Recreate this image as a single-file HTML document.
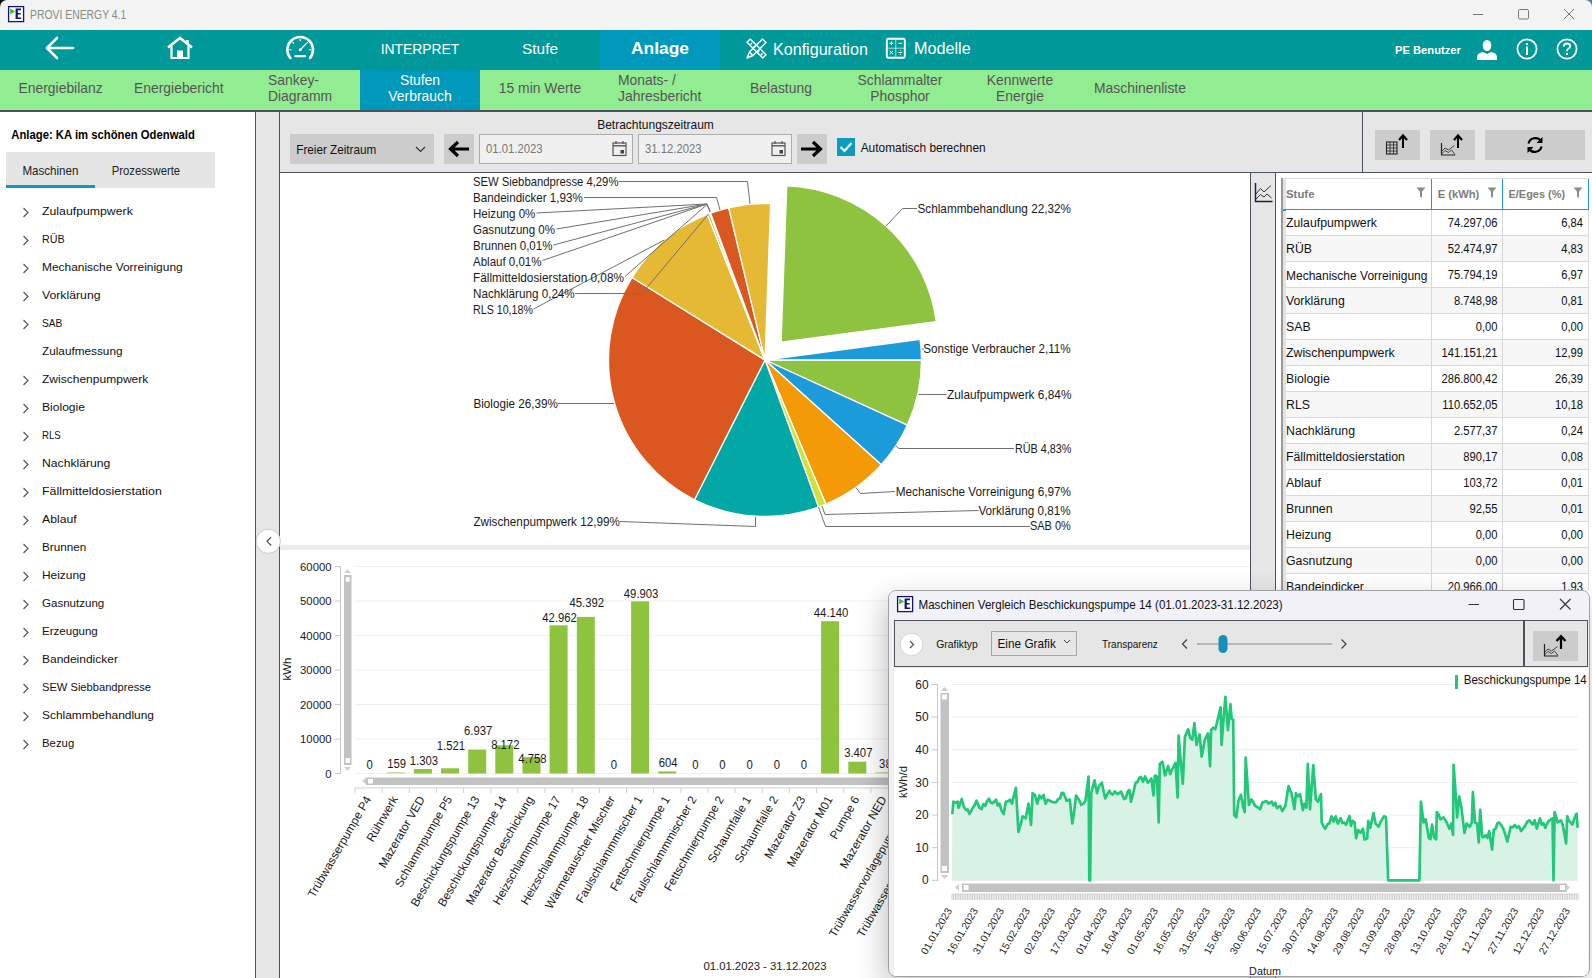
<!DOCTYPE html><html><head><meta charset="utf-8"><style>
html,body{margin:0;padding:0}
body{width:1592px;height:978px;overflow:hidden;position:relative;background:#fff;font-family:"Liberation Sans",sans-serif}
.t{position:absolute;white-space:nowrap}
.r{position:absolute}
</style></head><body>
<div class="r" style="left:0px;top:0px;width:8px;height:8px;background:#111"></div>
<div class="r" style="left:1584px;top:0px;width:8px;height:8px;background:#4f7aa3"></div>
<div class="r" style="left:0px;top:0px;width:1592px;height:30px;background:#f3f3f3;border-radius:7px 7px 0 0"></div>
<svg class="r" style="left:7px;top:5px" width="18" height="18" viewBox="0 0 18 18"><rect x="1.6" y="1.6" width="15" height="15" fill="#fff" stroke="#14146e" stroke-width="1.3"/><path d="M3.2 3.6 L8.2 6.4 L3.2 9.2Z" fill="#2ec52e"/><path d="M8.6 3.6 H14 V5.3 H10.8 V7.9 H13.6 V9.5 H10.8 V12.4 H14.2 V14 H8.6Z" fill="#14146e"/></svg>
<div class="t" style="left:30.0px;top:11.0px;font-size:10.4px;line-height:10.4px;color:#8a8a8a;font-weight:normal;transform:scaleY(1.2);transform-origin:0 80%">PROVI ENERGY 4.1</div>
<svg class="r" style="left:1460px;top:0" width="132" height="30"><path d="M13 14.5 H23" stroke="#777" stroke-width="1"/><rect x="58.5" y="9.5" width="10" height="9.5" rx="1.2" fill="none" stroke="#777" stroke-width="1"/><path d="M104 9 L114 19 M114 9 L104 19" stroke="#777" stroke-width="1"/></svg>
<div class="r" style="left:0px;top:30px;width:1592px;height:40px;background:#009898"></div>
<div class="r" style="left:600px;top:30px;width:120px;height:40px;background:#0099bb"></div>
<svg class="r" style="left:40px;top:30px" width="40" height="40"><path d="M7 18 H33 M17 8 L7 18 L17 28" fill="none" stroke="#fff" stroke-width="2.6" stroke-linecap="round" stroke-linejoin="round"/></svg>
<svg class="r" style="left:160px;top:29.8px" width="40" height="40"><path d="M8 17.5 L20 8 L32 17.5" fill="none" stroke="#fff" stroke-width="2.6" stroke-linejoin="miter"/><path d="M27.5 10 V14" stroke="#fff" stroke-width="2.4"/><path d="M11.5 16 V28 H28.5 V16" fill="none" stroke="#fff" stroke-width="2.2"/><rect x="17" y="20.5" width="6" height="7.5" fill="#fff"/></svg>
<svg class="r" style="left:280px;top:30px" width="40" height="40"><path d="M10.4 28 A12.8 12.8 0 1 1 30 28" fill="none" stroke="#fff" stroke-width="2.6" stroke-linecap="round"/><path d="M20.2 9 V11.3 M12.6 12.2 L14 13.6 M27.8 12.2 L26.4 13.6 M9.3 19.8 H11.6 M31.1 19.8 H28.8" stroke="#fff" stroke-width="1.1"/><path d="M20.2 19.8 L26.2 13.8" stroke="#fff" stroke-width="1.3"/><circle cx="20.2" cy="19.8" r="1.5" fill="#fff"/><path d="M15.5 26.2 H25" stroke="#fff" stroke-width="2.3" stroke-linecap="round"/></svg>
<div class="t" style="left:360.0px;width:120px;top:42.9px;font-size:13.9px;line-height:13.9px;color:#fff;font-weight:normal;text-align:center;transform:scaleY(1.04);transform-origin:50% 80%">INTERPRET</div>
<div class="t" style="left:480.0px;width:120px;top:41.4px;font-size:15.4px;line-height:15.4px;color:#fff;font-weight:normal;text-align:center;">Stufe</div>
<div class="t" style="left:600.0px;width:120px;top:40.4px;font-size:17.4px;line-height:17.4px;color:#fff;font-weight:bold;text-align:center;">Anlage</div>
<svg class="r" style="left:745.5px;top:37.5px" width="21" height="21" viewBox="0 0 21 21"><g fill="none" stroke="#fff" stroke-width="1.5" stroke-linejoin="round"><path d="M1 4.2 L4.2 1 L20 16.8 L16.8 20 Z"/><path d="M4.5 6.5 L6 5 M7.5 9.5 L9 8 M12 14 L13.5 12.5 M15 17 L16.5 15.5"/><path d="M16.5 1 L20 4.5 L7 17.5 L1 20 L3.5 14 Z M3.5 14 L7 17.5"/></g></svg>
<div class="t" style="left:773.0px;top:40.5px;font-size:16.1px;line-height:16.1px;color:#fff;font-weight:normal;">Konfiguration</div>
<svg class="r" style="left:885px;top:37px" width="22" height="22" viewBox="0 0 22 22"><rect x="1.8" y="1.8" width="18" height="19" rx="1.5" fill="none" stroke="#fff" stroke-width="1.9"/><path d="M10.8 2.5 V20 M2.5 11.2 H19.5" stroke="#fff" stroke-opacity="0.75" stroke-width="0.9"/><path d="M4.5 6.3 H8.3 M6.4 4.4 V8.2 M13.4 6.3 H17.2 M4.6 13.8 L8 17.2 M8 13.8 L4.6 17.2 M13.4 15.5 H17.2" stroke="#fff" stroke-width="1"/><circle cx="15.3" cy="13.6" r="0.6" fill="#fff"/><circle cx="15.3" cy="17.4" r="0.6" fill="#fff"/></svg>
<div class="t" style="left:914.0px;top:40.4px;font-size:16.2px;line-height:16.2px;color:#fff;font-weight:normal;">Modelle</div>
<div class="t" style="left:1395.0px;top:45.3px;font-size:11.2px;line-height:11.2px;color:#fff;font-weight:bold;">PE Benutzer</div>
<svg class="r" style="left:1476px;top:39px" width="22" height="22"><ellipse cx="11" cy="6.5" rx="4.3" ry="5.5" fill="#fff"/><path d="M1 21 V18 Q1 14 7 13 L11 15 L15 13 Q21 14 21 18 V21 Z" fill="#fff"/></svg>
<svg class="r" style="left:1515px;top:37px" width="24" height="24"><circle cx="12" cy="12" r="9.6" fill="none" stroke="#fff" stroke-width="1.8"/><rect x="11" y="9.5" width="2" height="8.5" fill="#fff"/><rect x="11" y="6" width="2" height="2" fill="#fff"/></svg>
<svg class="r" style="left:1555px;top:37px" width="24" height="24"><circle cx="12" cy="12" r="9.6" fill="none" stroke="#fff" stroke-width="1.8"/><path d="M8.8 9.5 Q8.8 6.5 12 6.5 Q15.2 6.5 15.2 9.2 Q15.2 11 13 12 Q12 12.5 12 14.2" fill="none" stroke="#fff" stroke-width="1.8"/><rect x="11" y="16" width="2" height="2" fill="#fff"/></svg>
<div class="r" style="left:0px;top:70px;width:1592px;height:40px;background:#92ec92"></div>
<div class="r" style="left:360px;top:70px;width:120px;height:40px;background:#0099bb"></div>
<div class="r" style="left:0px;top:110px;width:1592px;height:2px;background:#4b5260"></div>
<div class="t" style="left:18.5px;top:82.0px;font-size:13.9px;line-height:13.9px;color:#555555;font-weight:normal;transform:scaleY(1.08);transform-origin:0 80%">Energiebilanz</div>
<div class="t" style="left:134.0px;top:82.0px;font-size:13.9px;line-height:13.9px;color:#555555;font-weight:normal;transform:scaleY(1.08);transform-origin:0 80%">Energiebericht</div>
<div class="t" style="left:268.0px;top:74.0px;font-size:13.9px;line-height:13.9px;color:#555555;font-weight:normal;transform:scaleY(1.08);transform-origin:0 80%">Sankey-</div>
<div class="t" style="left:268.0px;top:90.0px;font-size:13.9px;line-height:13.9px;color:#555555;font-weight:normal;transform:scaleY(1.08);transform-origin:0 80%">Diagramm</div>
<div class="t" style="left:360.0px;width:120px;top:74.0px;font-size:13.9px;line-height:13.9px;color:#fff;font-weight:normal;text-align:center;transform:scaleY(1.08);transform-origin:50% 80%">Stufen</div>
<div class="t" style="left:360.0px;width:120px;top:90.0px;font-size:13.9px;line-height:13.9px;color:#fff;font-weight:normal;text-align:center;transform:scaleY(1.08);transform-origin:50% 80%">Verbrauch</div>
<div class="t" style="left:480.0px;width:120px;top:82.0px;font-size:13.9px;line-height:13.9px;color:#555555;font-weight:normal;text-align:center;transform:scaleY(1.08);transform-origin:50% 80%">15 min Werte</div>
<div class="t" style="left:618.0px;top:74.0px;font-size:13.9px;line-height:13.9px;color:#555555;font-weight:normal;transform:scaleY(1.08);transform-origin:0 80%">Monats- /</div>
<div class="t" style="left:618.0px;top:90.0px;font-size:13.9px;line-height:13.9px;color:#555555;font-weight:normal;transform:scaleY(1.08);transform-origin:0 80%">Jahresbericht</div>
<div class="t" style="left:721.0px;width:120px;top:82.0px;font-size:13.9px;line-height:13.9px;color:#555555;font-weight:normal;text-align:center;transform:scaleY(1.08);transform-origin:50% 80%">Belastung</div>
<div class="t" style="left:840.0px;width:120px;top:74.0px;font-size:13.9px;line-height:13.9px;color:#555555;font-weight:normal;text-align:center;transform:scaleY(1.08);transform-origin:50% 80%">Schlammalter</div>
<div class="t" style="left:840.0px;width:120px;top:90.0px;font-size:13.9px;line-height:13.9px;color:#555555;font-weight:normal;text-align:center;transform:scaleY(1.08);transform-origin:50% 80%">Phosphor</div>
<div class="t" style="left:960.0px;width:120px;top:74.0px;font-size:13.9px;line-height:13.9px;color:#555555;font-weight:normal;text-align:center;transform:scaleY(1.08);transform-origin:50% 80%">Kennwerte</div>
<div class="t" style="left:960.0px;width:120px;top:90.0px;font-size:13.9px;line-height:13.9px;color:#555555;font-weight:normal;text-align:center;transform:scaleY(1.08);transform-origin:50% 80%">Energie</div>
<div class="t" style="left:1080.0px;width:120px;top:82.0px;font-size:13.9px;line-height:13.9px;color:#555555;font-weight:normal;text-align:center;transform:scaleY(1.08);transform-origin:50% 80%">Maschinenliste</div>
<div class="r" style="left:0px;top:112px;width:255px;height:866px;background:#fff"></div>
<div class="t" style="left:11.3px;top:130.4px;font-size:11.3px;line-height:11.3px;color:#000;font-weight:bold;transform:scaleY(1.1);transform-origin:0 80%">Anlage: KA im schönen Odenwald</div>
<div class="r" style="left:6px;top:152px;width:209px;height:36px;background:#e5e5e5"></div>
<div class="r" style="left:6px;top:185px;width:89px;height:3px;background:#0f98c0"></div>
<div class="t" style="left:22.4px;top:165.2px;font-size:11.6px;line-height:11.6px;color:#222;font-weight:normal;transform:scaleY(1.1);transform-origin:0 90%">Maschinen</div>
<div class="t" style="left:111.7px;top:166.1px;font-size:11.3px;line-height:11.3px;color:#222;font-weight:normal;transform:scaleY(1.1);transform-origin:0 90%">Prozesswerte</div>
<svg class="r" style="left:21px;top:206px" width="10" height="12"><path d="M2.5 2 L7 6.5 L2.5 11" fill="none" stroke="#555" stroke-width="1.15"/></svg>
<div class="t" style="left:42.0px;top:205.8px;font-size:11.8px;line-height:11.8px;color:#111;font-weight:normal;transform:scaleX(1.0410);transform-origin:0 80%">Zulaufpumpwerk</div>
<svg class="r" style="left:21px;top:234px" width="10" height="12"><path d="M2.5 2 L7 6.5 L2.5 11" fill="none" stroke="#555" stroke-width="1.15"/></svg>
<div class="t" style="left:42.0px;top:233.8px;font-size:11.8px;line-height:11.8px;color:#111;font-weight:normal;transform:scaleX(0.9071);transform-origin:0 80%">RÜB</div>
<svg class="r" style="left:21px;top:262px" width="10" height="12"><path d="M2.5 2 L7 6.5 L2.5 11" fill="none" stroke="#555" stroke-width="1.15"/></svg>
<div class="t" style="left:42.0px;top:261.8px;font-size:11.8px;line-height:11.8px;color:#111;font-weight:normal;transform:scaleX(1.0118);transform-origin:0 80%">Mechanische Vorreinigung</div>
<svg class="r" style="left:21px;top:290px" width="10" height="12"><path d="M2.5 2 L7 6.5 L2.5 11" fill="none" stroke="#555" stroke-width="1.15"/></svg>
<div class="t" style="left:42.0px;top:289.8px;font-size:11.8px;line-height:11.8px;color:#111;font-weight:normal;transform:scaleX(1.0371);transform-origin:0 80%">Vorklärung</div>
<svg class="r" style="left:21px;top:318px" width="10" height="12"><path d="M2.5 2 L7 6.5 L2.5 11" fill="none" stroke="#555" stroke-width="1.15"/></svg>
<div class="t" style="left:42.0px;top:317.8px;font-size:11.8px;line-height:11.8px;color:#111;font-weight:normal;transform:scaleX(0.8639);transform-origin:0 80%">SAB</div>
<div class="t" style="left:42.0px;top:345.8px;font-size:11.8px;line-height:11.8px;color:#111;font-weight:normal;transform:scaleX(0.9979);transform-origin:0 80%">Zulaufmessung</div>
<svg class="r" style="left:21px;top:374px" width="10" height="12"><path d="M2.5 2 L7 6.5 L2.5 11" fill="none" stroke="#555" stroke-width="1.15"/></svg>
<div class="t" style="left:42.0px;top:373.8px;font-size:11.8px;line-height:11.8px;color:#111;font-weight:normal;transform:scaleX(1.0195);transform-origin:0 80%">Zwischenpumpwerk</div>
<svg class="r" style="left:21px;top:402px" width="10" height="12"><path d="M2.5 2 L7 6.5 L2.5 11" fill="none" stroke="#555" stroke-width="1.15"/></svg>
<div class="t" style="left:42.0px;top:401.8px;font-size:11.8px;line-height:11.8px;color:#111;font-weight:normal;transform:scaleX(1.0242);transform-origin:0 80%">Biologie</div>
<svg class="r" style="left:21px;top:430px" width="10" height="12"><path d="M2.5 2 L7 6.5 L2.5 11" fill="none" stroke="#555" stroke-width="1.15"/></svg>
<div class="t" style="left:42.0px;top:429.8px;font-size:11.8px;line-height:11.8px;color:#111;font-weight:normal;transform:scaleX(0.8146);transform-origin:0 80%">RLS</div>
<svg class="r" style="left:21px;top:458px" width="10" height="12"><path d="M2.5 2 L7 6.5 L2.5 11" fill="none" stroke="#555" stroke-width="1.15"/></svg>
<div class="t" style="left:42.0px;top:457.8px;font-size:11.8px;line-height:11.8px;color:#111;font-weight:normal;transform:scaleX(1.0310);transform-origin:0 80%">Nachklärung</div>
<svg class="r" style="left:21px;top:486px" width="10" height="12"><path d="M2.5 2 L7 6.5 L2.5 11" fill="none" stroke="#555" stroke-width="1.15"/></svg>
<div class="t" style="left:42.0px;top:485.8px;font-size:11.8px;line-height:11.8px;color:#111;font-weight:normal;transform:scaleX(1.0499);transform-origin:0 80%">Fällmitteldosierstation</div>
<svg class="r" style="left:21px;top:514px" width="10" height="12"><path d="M2.5 2 L7 6.5 L2.5 11" fill="none" stroke="#555" stroke-width="1.15"/></svg>
<div class="t" style="left:42.0px;top:513.8px;font-size:11.8px;line-height:11.8px;color:#111;font-weight:normal;transform:scaleX(1.0372);transform-origin:0 80%">Ablauf</div>
<svg class="r" style="left:21px;top:542px" width="10" height="12"><path d="M2.5 2 L7 6.5 L2.5 11" fill="none" stroke="#555" stroke-width="1.15"/></svg>
<div class="t" style="left:42.0px;top:541.8px;font-size:11.8px;line-height:11.8px;color:#111;font-weight:normal;transform:scaleX(0.9908);transform-origin:0 80%">Brunnen</div>
<svg class="r" style="left:21px;top:570px" width="10" height="12"><path d="M2.5 2 L7 6.5 L2.5 11" fill="none" stroke="#555" stroke-width="1.15"/></svg>
<div class="t" style="left:42.0px;top:569.8px;font-size:11.8px;line-height:11.8px;color:#111;font-weight:normal;transform:scaleX(1.0094);transform-origin:0 80%">Heizung</div>
<svg class="r" style="left:21px;top:598px" width="10" height="12"><path d="M2.5 2 L7 6.5 L2.5 11" fill="none" stroke="#555" stroke-width="1.15"/></svg>
<div class="t" style="left:42.0px;top:597.8px;font-size:11.8px;line-height:11.8px;color:#111;font-weight:normal;transform:scaleX(0.9791);transform-origin:0 80%">Gasnutzung</div>
<svg class="r" style="left:21px;top:626px" width="10" height="12"><path d="M2.5 2 L7 6.5 L2.5 11" fill="none" stroke="#555" stroke-width="1.15"/></svg>
<div class="t" style="left:42.0px;top:625.8px;font-size:11.8px;line-height:11.8px;color:#111;font-weight:normal;transform:scaleX(0.9777);transform-origin:0 80%">Erzeugung</div>
<svg class="r" style="left:21px;top:654px" width="10" height="12"><path d="M2.5 2 L7 6.5 L2.5 11" fill="none" stroke="#555" stroke-width="1.15"/></svg>
<div class="t" style="left:42.0px;top:653.8px;font-size:11.8px;line-height:11.8px;color:#111;font-weight:normal;transform:scaleX(1.0150);transform-origin:0 80%">Bandeindicker</div>
<svg class="r" style="left:21px;top:682px" width="10" height="12"><path d="M2.5 2 L7 6.5 L2.5 11" fill="none" stroke="#555" stroke-width="1.15"/></svg>
<div class="t" style="left:42.0px;top:681.8px;font-size:11.8px;line-height:11.8px;color:#111;font-weight:normal;transform:scaleX(0.9442);transform-origin:0 80%">SEW Siebbandpresse</div>
<svg class="r" style="left:21px;top:710px" width="10" height="12"><path d="M2.5 2 L7 6.5 L2.5 11" fill="none" stroke="#555" stroke-width="1.15"/></svg>
<div class="t" style="left:42.0px;top:709.8px;font-size:11.8px;line-height:11.8px;color:#111;font-weight:normal;transform:scaleX(1.0103);transform-origin:0 80%">Schlammbehandlung</div>
<svg class="r" style="left:21px;top:738px" width="10" height="12"><path d="M2.5 2 L7 6.5 L2.5 11" fill="none" stroke="#555" stroke-width="1.15"/></svg>
<div class="t" style="left:42.0px;top:737.8px;font-size:11.8px;line-height:11.8px;color:#111;font-weight:normal;transform:scaleX(0.9624);transform-origin:0 80%">Bezug</div>
<div class="r" style="left:255px;top:112px;width:25px;height:866px;background:#e6e6e6"></div>
<div class="r" style="left:255px;top:112px;width:1px;height:866px;background:#4b5260"></div>
<div class="r" style="left:279px;top:112px;width:1px;height:866px;background:#4b5260"></div>
<svg class="r" style="left:254px;top:527px" width="30" height="30"><circle cx="14.3" cy="14.3" r="12.1" fill="#fff" stroke="#c4c4c4" stroke-width="0.9"/><path d="M17.2 10.2 L13 14.3 L17.2 18.5" fill="none" stroke="#444" stroke-width="1.1"/></svg>
<div class="r" style="left:280px;top:112px;width:1312px;height:60px;background:#e6e6e6"></div>
<div class="r" style="left:280px;top:172px;width:1312px;height:1px;background:#4b5260"></div>
<div class="r" style="left:1362px;top:112px;width:1px;height:61px;background:#4b5260"></div>
<div class="t" style="left:555.5px;width:200px;top:118.6px;font-size:12.0px;line-height:12.0px;color:#111;font-weight:normal;text-align:center;transform:scaleY(1.05);transform-origin:50% 80%">Betrachtungszeitraum</div>
<div class="r" style="left:290px;top:134px;width:144px;height:30px;background:#cccccc"></div>
<div class="t" style="left:296.3px;top:144.1px;font-size:11.7px;line-height:11.7px;color:#111;font-weight:normal;transform:scaleY(1.08);transform-origin:0 80%">Freier Zeitraum</div>
<svg class="r" style="left:414px;top:145px" width="14" height="10"><path d="M2 2 L6.5 6.5 L11 2" fill="none" stroke="#333" stroke-width="1.2"/></svg>
<div class="r" style="left:444px;top:134px;width:30px;height:30px;background:#cccccc"></div>
<svg class="r" style="left:444px;top:134px" width="30" height="30"><path d="M25 15 H8 M14 8 L6.5 15 L14 22" fill="none" stroke="#000" stroke-width="3.2" stroke-linejoin="miter"/></svg>
<div class="r" style="left:479px;top:134px;width:154px;height:30px;background:#f0f0f0;border:1px solid #adadad;box-sizing:border-box"></div>
<div class="t" style="left:486.0px;top:143.9px;font-size:11.3px;line-height:11.3px;color:#777;font-weight:normal;transform:scaleY(1.08);transform-origin:0 80%">01.01.2023</div>
<svg class="r" style="left:612px;top:140px" width="16" height="17"><rect x="1" y="3" width="13" height="12.5" fill="none" stroke="#555" stroke-width="1.2"/><path d="M1 5.8 H14" stroke="#555" stroke-width="1.4"/><path d="M4 1 V4 M11 1 V4" stroke="#555" stroke-width="1.2"/><rect x="8.5" y="10" width="3.5" height="3.5" fill="#444"/></svg>
<div class="r" style="left:638px;top:134px;width:154px;height:30px;background:#f0f0f0;border:1px solid #adadad;box-sizing:border-box"></div>
<div class="t" style="left:645.0px;top:143.9px;font-size:11.3px;line-height:11.3px;color:#777;font-weight:normal;transform:scaleY(1.08);transform-origin:0 80%">31.12.2023</div>
<svg class="r" style="left:771px;top:140px" width="16" height="17"><rect x="1" y="3" width="13" height="12.5" fill="none" stroke="#555" stroke-width="1.2"/><path d="M1 5.8 H14" stroke="#555" stroke-width="1.4"/><path d="M4 1 V4 M11 1 V4" stroke="#555" stroke-width="1.2"/><rect x="8.5" y="10" width="3.5" height="3.5" fill="#444"/></svg>
<div class="r" style="left:797px;top:134px;width:30px;height:30px;background:#cccccc"></div>
<svg class="r" style="left:797px;top:134px" width="30" height="30"><path d="M4 15 H22 M16 8 L23.5 15 L16 22" fill="none" stroke="#000" stroke-width="3.2" stroke-linejoin="miter"/></svg>
<div class="r" style="left:837px;top:138px;width:18px;height:18px;background:#0e9bc2"></div>
<svg class="r" style="left:837px;top:138px" width="18" height="18"><path d="M3.5 9 L7.5 13 L14.5 5" fill="none" stroke="#fff" stroke-width="2"/></svg>
<div class="t" style="left:860.7px;top:142.5px;font-size:11.9px;line-height:11.9px;color:#111;font-weight:normal;transform:scaleY(1.05);transform-origin:0 80%">Automatisch berechnen</div>
<div class="r" style="left:1375px;top:130px;width:45px;height:30px;background:#cccccc"></div>
<div class="r" style="left:1430px;top:130px;width:45px;height:30px;background:#cccccc"></div>
<div class="r" style="left:1485px;top:130px;width:100px;height:30px;background:#cccccc"></div>
<svg class="r" style="left:1375px;top:130px" width="45" height="30"><rect x="11.5" y="12" width="10.5" height="12" fill="none" stroke="#222" stroke-width="1.1"/><path d="M11.5 15 H22 M11.5 18 H22 M11.5 21 H22 M15 12 V24 M18.5 12 V24" stroke="#222" stroke-width="0.8"/><path d="M28 18 V6.5" stroke="#000" stroke-width="2"/><path d="M24 10 L28 5.5 L32 10" fill="none" stroke="#000" stroke-width="2.2"/></svg>
<svg class="r" style="left:1430px;top:130px" width="45" height="30"><path d="M11.5 13 V25 H25" fill="none" stroke="#222" stroke-width="1.2"/><path d="M11.5 21.5 L15 18 L18.5 20 L24.5 15.5 M11.5 24 L15 20.5 L18.5 22.5 L21.5 20 L25 24.5" fill="none" stroke="#333" stroke-width="0.9"/><path d="M28 18 V6.5" stroke="#000" stroke-width="2"/><path d="M24 10 L28 5.5 L32 10" fill="none" stroke="#000" stroke-width="2.2"/></svg>
<svg class="r" style="left:1485px;top:130px" width="100" height="30"><path d="M43.5 13.5 A7 7 0 0 1 56 11" fill="none" stroke="#000" stroke-width="2.2"/><path d="M57.5 7 V13 H51.5Z" fill="#000"/><path d="M56.5 16.5 A7 7 0 0 1 44 19" fill="none" stroke="#000" stroke-width="2.2"/><path d="M42.5 23 V17 H48.5Z" fill="#000"/></svg>
<svg class="r" style="left:0;top:0" width="1592" height="978"><path d="M765.00 360.00 L921.50 360.00 A156.5 156.5 0 0 1 907.27 425.21 Z" fill="#8dc33f" stroke="#fff" stroke-width="1.3" stroke-linejoin="round"/><path d="M765.00 360.00 L907.27 425.21 A156.5 156.5 0 0 1 881.28 464.74 Z" fill="#1c9bdb" stroke="#fff" stroke-width="1.3" stroke-linejoin="round"/><path d="M765.00 360.00 L881.28 464.74 A156.5 156.5 0 0 1 825.89 504.17 Z" fill="#f39a06" stroke="#fff" stroke-width="1.3" stroke-linejoin="round"/><path d="M765.00 360.00 L825.89 504.17 A156.5 156.5 0 0 1 818.47 507.08 Z" fill="#d2e03a" stroke="#fff" stroke-width="1.3" stroke-linejoin="round"/><path d="M765.00 360.00 L818.47 507.08 A156.5 156.5 0 0 1 694.48 499.71 Z" fill="#01a8a6" stroke="#fff" stroke-width="1.3" stroke-linejoin="round"/><path d="M765.00 360.00 L694.48 499.71 A156.5 156.5 0 0 1 631.97 277.56 Z" fill="#da5820" stroke="#fff" stroke-width="1.3" stroke-linejoin="round"/><path d="M765.00 360.00 L631.97 277.56 A156.5 156.5 0 0 1 707.48 214.45 Z" fill="#e5b933" stroke="#fff" stroke-width="1.3" stroke-linejoin="round"/><path d="M765.00 360.00 L707.48 214.45 A156.5 156.5 0 0 1 709.68 213.60 Z" fill="#8dc33f" stroke="#fff" stroke-width="1.3" stroke-linejoin="round"/><path d="M765.00 360.00 L709.68 213.60 A156.5 156.5 0 0 1 710.42 213.33 Z" fill="#1c9bdb" stroke="#fff" stroke-width="1.3" stroke-linejoin="round"/><path d="M765.00 360.00 L710.42 213.33 A156.5 156.5 0 0 1 710.51 213.29 Z" fill="#f39a06" stroke="#fff" stroke-width="1.3" stroke-linejoin="round"/><path d="M765.00 360.00 L710.51 213.29 A156.5 156.5 0 0 1 710.60 213.26 Z" fill="#d2e03a" stroke="#fff" stroke-width="1.3" stroke-linejoin="round"/><path d="M765.00 360.00 L710.60 213.26 A156.5 156.5 0 0 1 728.75 207.76 Z" fill="#da5820" stroke="#fff" stroke-width="1.3" stroke-linejoin="round"/><path d="M765.00 360.00 L728.75 207.76 A156.5 156.5 0 0 1 770.60 203.60 Z" fill="#e5b933" stroke="#fff" stroke-width="1.3" stroke-linejoin="round"/><path d="M781.13 342.23 L786.73 185.83 A156.5 156.5 0 0 1 936.26 321.54 Z" fill="#8dc33f" stroke="#fff" stroke-width="1.3" stroke-linejoin="round"/><path d="M765.00 360.00 L920.13 339.31 A156.5 156.5 0 0 1 921.50 360.00 Z" fill="#1c9bdb" stroke="#fff" stroke-width="1.3" stroke-linejoin="round"/><path d="M619 181.5 L747.5 181.5 L750 204" fill="none" stroke="#707070" stroke-width="1"/><path d="M584 197.5 L716.5 197.5 L720 210" fill="none" stroke="#707070" stroke-width="1"/><path d="M536.5 213 L707 204 L710.5 212" fill="none" stroke="#707070" stroke-width="1"/><path d="M556.5 229 L707 204" fill="none" stroke="#707070" stroke-width="1"/><path d="M553.5 245 L707 204" fill="none" stroke="#707070" stroke-width="1"/><path d="M542.5 260.5 L707 204" fill="none" stroke="#707070" stroke-width="1"/><path d="M625 276.5 L707 204.5 L710 212" fill="none" stroke="#707070" stroke-width="1"/><path d="M575 293.5 L642 293.5 L708.5 214" fill="none" stroke="#707070" stroke-width="1"/><path d="M533.5 309 L664.4 240" fill="none" stroke="#707070" stroke-width="1"/><path d="M558 403.5 L614 403.5" fill="none" stroke="#707070" stroke-width="1"/><path d="M620 521.5 L755.5 526.5 L755.5 517" fill="none" stroke="#707070" stroke-width="1"/><path d="M922 349 L924 349" fill="none" stroke="#707070" stroke-width="1"/><path d="M918.5 394.5 L946.5 394.5" fill="none" stroke="#707070" stroke-width="1"/><path d="M896 446 L899 448.5 L1014 448.5" fill="none" stroke="#707070" stroke-width="1"/><path d="M856 487.5 L860.5 493.5 L895 491.5" fill="none" stroke="#707070" stroke-width="1"/><path d="M822 506 L825 514.5 L978.5 510.5" fill="none" stroke="#707070" stroke-width="1"/><path d="M818.5 507 L825.5 526.5 L1030 526.5" fill="none" stroke="#707070" stroke-width="1"/><path d="M886 226 L902.5 208.5 L917 208.5" fill="none" stroke="#707070" stroke-width="1"/></svg>
<div class="t" style="left:473.4px;top:175.9px;font-size:11.75px;line-height:11.75px;color:#1a1a1a;font-weight:normal;transform:scale(0.9596,1.05);transform-origin:0 80%">SEW Siebbandpresse 4,29%</div>
<div class="t" style="left:473.4px;top:191.9px;font-size:11.75px;line-height:11.75px;color:#1a1a1a;font-weight:normal;transform:scale(0.9888,1.05);transform-origin:0 80%">Bandeindicker 1,93%</div>
<div class="t" style="left:473.4px;top:207.9px;font-size:11.75px;line-height:11.75px;color:#1a1a1a;font-weight:normal;transform:scale(0.9849,1.05);transform-origin:0 80%">Heizung 0%</div>
<div class="t" style="left:473.4px;top:223.9px;font-size:11.75px;line-height:11.75px;color:#1a1a1a;font-weight:normal;transform:scale(0.9808,1.05);transform-origin:0 80%">Gasnutzung 0%</div>
<div class="t" style="left:473.4px;top:239.9px;font-size:11.75px;line-height:11.75px;color:#1a1a1a;font-weight:normal;transform:scale(0.9803,1.05);transform-origin:0 80%">Brunnen 0,01%</div>
<div class="t" style="left:473.4px;top:255.9px;font-size:11.75px;line-height:11.75px;color:#1a1a1a;font-weight:normal;transform:scale(0.9801,1.05);transform-origin:0 80%">Ablauf 0,01%</div>
<div class="t" style="left:473.4px;top:271.9px;font-size:11.75px;line-height:11.75px;color:#1a1a1a;font-weight:normal;transform:scale(1.0053,1.05);transform-origin:0 80%">Fällmitteldosierstation 0,08%</div>
<div class="t" style="left:473.4px;top:287.9px;font-size:11.75px;line-height:11.75px;color:#1a1a1a;font-weight:normal;transform:scale(0.9918,1.05);transform-origin:0 80%">Nachklärung 0,24%</div>
<div class="t" style="left:473.4px;top:303.9px;font-size:11.75px;line-height:11.75px;color:#1a1a1a;font-weight:normal;transform:scale(0.9080,1.05);transform-origin:0 80%">RLS 10,18%</div>
<div class="t" style="left:473.4px;top:397.9px;font-size:11.69px;line-height:11.69px;color:#1a1a1a;font-weight:normal;transform:scaleY(1.05);transform-origin:0 80%">Biologie 26,39%</div>
<div class="t" style="left:473.4px;top:515.9px;font-size:11.72px;line-height:11.72px;color:#1a1a1a;font-weight:normal;transform:scaleY(1.05);transform-origin:0 80%">Zwischenpumpwerk 12,99%</div>
<div class="t" style="left:917.5px;top:202.9px;font-size:11.75px;line-height:11.75px;color:#1a1a1a;font-weight:normal;transform:scaleY(1.05);transform-origin:0 80%">Schlammbehandlung 22,32%</div>
<div class="t" style="right:521.0px;top:343.4px;font-size:11.75px;line-height:11.75px;color:#1a1a1a;font-weight:normal;text-align:right;transform:scale(0.9919,1.05);transform-origin:100% 80%">Sonstige Verbraucher 2,11%</div>
<div class="t" style="right:521.0px;top:388.9px;font-size:11.75px;line-height:11.75px;color:#1a1a1a;font-weight:normal;text-align:right;transform:scale(1.0087,1.05);transform-origin:100% 80%">Zulaufpumpwerk 6,84%</div>
<div class="t" style="right:521.0px;top:442.9px;font-size:11.75px;line-height:11.75px;color:#1a1a1a;font-weight:normal;text-align:right;transform:scale(0.9204,1.05);transform-origin:100% 80%">RÜB 4,83%</div>
<div class="t" style="right:521.0px;top:485.9px;font-size:11.75px;line-height:11.75px;color:#1a1a1a;font-weight:normal;text-align:right;transform:scale(1.0020,1.05);transform-origin:100% 80%">Mechanische Vorreinigung 6,97%</div>
<div class="t" style="right:521.0px;top:505.2px;font-size:11.75px;line-height:11.75px;color:#1a1a1a;font-weight:normal;text-align:right;transform:scale(0.9952,1.05);transform-origin:100% 80%">Vorklärung 0,81%</div>
<div class="t" style="right:521.0px;top:520.4px;font-size:11.75px;line-height:11.75px;color:#1a1a1a;font-weight:normal;text-align:right;transform:scale(0.9324,1.05);transform-origin:100% 80%">SAB 0%</div>
<div class="r" style="left:280px;top:545px;width:970px;height:5px;background:#ececec"></div>
<div class="r" style="left:1250px;top:173px;width:26px;height:805px;background:#e6e6e6"></div>
<div class="r" style="left:1250px;top:173px;width:1px;height:805px;background:#4b5260"></div>
<div class="r" style="left:1275px;top:173px;width:1px;height:805px;background:#4b5260"></div>
<svg class="r" style="left:1253px;top:181px" width="22" height="22"><path d="M2.5 2 V20.5 H19.5" fill="none" stroke="#222" stroke-width="1.5"/><path d="M3 13 L7.5 7.5 L11 11 L18 4.5 M3 18 L7.5 13.5 L11 16 L14 13 L18.5 17" fill="none" stroke="#333" stroke-width="1"/></svg>
<div class="r" style="left:1276px;top:173px;width:316px;height:805px;background:#fff"></div>
<div class="r" style="left:1281px;top:178px;width:308px;height:412px;background:#fff;border-top:1px solid #d9d9d9"></div>
<div class="r" style="left:1281px;top:178px;width:2px;height:412px;background:#9a9a9a"></div>
<div class="r" style="left:1283px;top:178px;width:3px;height:412px;background:#e3e3e3"></div>
<div class="t" style="left:1286.0px;top:188.9px;font-size:11.4px;line-height:11.4px;color:#7c7c7c;font-weight:bold;">Stufe</div>
<div class="t" style="left:1437.7px;top:189.1px;font-size:11.2px;line-height:11.2px;color:#7c7c7c;font-weight:bold;">E (kWh)</div>
<div class="t" style="left:1508.5px;top:189.3px;font-size:10.95px;line-height:10.95px;color:#7c7c7c;font-weight:bold;">E/Eges (%)</div>
<svg class="r" style="left:1416px;top:187px" width="10" height="12"><path d="M0.5 0.5 H9.5 L6 4.5 V11 L4 9.5 V4.5 Z" fill="#8a8a8a"/></svg>
<svg class="r" style="left:1487px;top:187px" width="10" height="12"><path d="M0.5 0.5 H9.5 L6 4.5 V11 L4 9.5 V4.5 Z" fill="#8a8a8a"/></svg>
<svg class="r" style="left:1573px;top:187px" width="10" height="12"><path d="M0.5 0.5 H9.5 L6 4.5 V11 L4 9.5 V4.5 Z" fill="#8a8a8a"/></svg>
<div class="r" style="left:1283px;top:209px;width:306px;height:1.5px;background:#1f9ad6"></div>
<div class="r" style="left:1431px;top:179px;width:1.2px;height:31px;background:#1f9ad6"></div>
<div class="r" style="left:1502px;top:179px;width:1.2px;height:31px;background:#1f9ad6"></div>
<div class="r" style="left:1588px;top:179px;width:1.2px;height:31px;background:#1f9ad6"></div>
<div class="r" style="left:1286px;top:210px;width:302px;height:26px;background:#ffffff"></div>
<div class="r" style="left:1286px;top:235px;width:302px;height:1px;background:#d8d8d8"></div>
<div class="t" style="left:1286.0px;top:217.4px;font-size:12.3px;line-height:12.3px;color:#111;font-weight:normal;transform:scaleY(1.05);transform-origin:0 80%">Zulaufpumpwerk</div>
<div class="t" style="right:94.5px;top:218.3px;font-size:11.2px;line-height:11.2px;color:#111;font-weight:normal;text-align:right;transform:scaleY(1.15);transform-origin:100% 80%">74.297,06</div>
<div class="t" style="right:9.0px;top:218.3px;font-size:11.2px;line-height:11.2px;color:#111;font-weight:normal;text-align:right;transform:scaleY(1.15);transform-origin:100% 80%">6,84</div>
<div class="r" style="left:1286px;top:236px;width:302px;height:26px;background:#f7f7f7"></div>
<div class="r" style="left:1286px;top:261px;width:302px;height:1px;background:#d8d8d8"></div>
<div class="t" style="left:1286.0px;top:243.4px;font-size:12.3px;line-height:12.3px;color:#111;font-weight:normal;transform:scaleY(1.05);transform-origin:0 80%">RÜB</div>
<div class="t" style="right:94.5px;top:244.3px;font-size:11.2px;line-height:11.2px;color:#111;font-weight:normal;text-align:right;transform:scaleY(1.15);transform-origin:100% 80%">52.474,97</div>
<div class="t" style="right:9.0px;top:244.3px;font-size:11.2px;line-height:11.2px;color:#111;font-weight:normal;text-align:right;transform:scaleY(1.15);transform-origin:100% 80%">4,83</div>
<div class="r" style="left:1286px;top:262px;width:302px;height:26px;background:#ffffff"></div>
<div class="r" style="left:1286px;top:287px;width:302px;height:1px;background:#d8d8d8"></div>
<div class="t" style="left:1286.0px;top:269.6px;font-size:12.0px;line-height:12.0px;color:#111;font-weight:normal;transform:scaleY(1.05);transform-origin:0 80%">Mechanische Vorreinigung</div>
<div class="t" style="right:94.5px;top:270.3px;font-size:11.2px;line-height:11.2px;color:#111;font-weight:normal;text-align:right;transform:scaleY(1.15);transform-origin:100% 80%">75.794,19</div>
<div class="t" style="right:9.0px;top:270.3px;font-size:11.2px;line-height:11.2px;color:#111;font-weight:normal;text-align:right;transform:scaleY(1.15);transform-origin:100% 80%">6,97</div>
<div class="r" style="left:1286px;top:288px;width:302px;height:26px;background:#f7f7f7"></div>
<div class="r" style="left:1286px;top:313px;width:302px;height:1px;background:#d8d8d8"></div>
<div class="t" style="left:1286.0px;top:295.4px;font-size:12.3px;line-height:12.3px;color:#111;font-weight:normal;transform:scaleY(1.05);transform-origin:0 80%">Vorklärung</div>
<div class="t" style="right:94.5px;top:296.3px;font-size:11.2px;line-height:11.2px;color:#111;font-weight:normal;text-align:right;transform:scaleY(1.15);transform-origin:100% 80%">8.748,98</div>
<div class="t" style="right:9.0px;top:296.3px;font-size:11.2px;line-height:11.2px;color:#111;font-weight:normal;text-align:right;transform:scaleY(1.15);transform-origin:100% 80%">0,81</div>
<div class="r" style="left:1286px;top:314px;width:302px;height:26px;background:#ffffff"></div>
<div class="r" style="left:1286px;top:339px;width:302px;height:1px;background:#d8d8d8"></div>
<div class="t" style="left:1286.0px;top:321.4px;font-size:12.3px;line-height:12.3px;color:#111;font-weight:normal;transform:scaleY(1.05);transform-origin:0 80%">SAB</div>
<div class="t" style="right:94.5px;top:322.3px;font-size:11.2px;line-height:11.2px;color:#111;font-weight:normal;text-align:right;transform:scaleY(1.15);transform-origin:100% 80%">0,00</div>
<div class="t" style="right:9.0px;top:322.3px;font-size:11.2px;line-height:11.2px;color:#111;font-weight:normal;text-align:right;transform:scaleY(1.15);transform-origin:100% 80%">0,00</div>
<div class="r" style="left:1286px;top:340px;width:302px;height:26px;background:#f7f7f7"></div>
<div class="r" style="left:1286px;top:365px;width:302px;height:1px;background:#d8d8d8"></div>
<div class="t" style="left:1286.0px;top:347.4px;font-size:12.3px;line-height:12.3px;color:#111;font-weight:normal;transform:scaleY(1.05);transform-origin:0 80%">Zwischenpumpwerk</div>
<div class="t" style="right:94.5px;top:348.3px;font-size:11.2px;line-height:11.2px;color:#111;font-weight:normal;text-align:right;transform:scaleY(1.15);transform-origin:100% 80%">141.151,21</div>
<div class="t" style="right:9.0px;top:348.3px;font-size:11.2px;line-height:11.2px;color:#111;font-weight:normal;text-align:right;transform:scaleY(1.15);transform-origin:100% 80%">12,99</div>
<div class="r" style="left:1286px;top:366px;width:302px;height:26px;background:#ffffff"></div>
<div class="r" style="left:1286px;top:391px;width:302px;height:1px;background:#d8d8d8"></div>
<div class="t" style="left:1286.0px;top:373.4px;font-size:12.3px;line-height:12.3px;color:#111;font-weight:normal;transform:scaleY(1.05);transform-origin:0 80%">Biologie</div>
<div class="t" style="right:94.5px;top:374.3px;font-size:11.2px;line-height:11.2px;color:#111;font-weight:normal;text-align:right;transform:scaleY(1.15);transform-origin:100% 80%">286.800,42</div>
<div class="t" style="right:9.0px;top:374.3px;font-size:11.2px;line-height:11.2px;color:#111;font-weight:normal;text-align:right;transform:scaleY(1.15);transform-origin:100% 80%">26,39</div>
<div class="r" style="left:1286px;top:392px;width:302px;height:26px;background:#f7f7f7"></div>
<div class="r" style="left:1286px;top:417px;width:302px;height:1px;background:#d8d8d8"></div>
<div class="t" style="left:1286.0px;top:399.4px;font-size:12.3px;line-height:12.3px;color:#111;font-weight:normal;transform:scaleY(1.05);transform-origin:0 80%">RLS</div>
<div class="t" style="right:94.5px;top:400.3px;font-size:11.2px;line-height:11.2px;color:#111;font-weight:normal;text-align:right;transform:scaleY(1.15);transform-origin:100% 80%">110.652,05</div>
<div class="t" style="right:9.0px;top:400.3px;font-size:11.2px;line-height:11.2px;color:#111;font-weight:normal;text-align:right;transform:scaleY(1.15);transform-origin:100% 80%">10,18</div>
<div class="r" style="left:1286px;top:418px;width:302px;height:26px;background:#ffffff"></div>
<div class="r" style="left:1286px;top:443px;width:302px;height:1px;background:#d8d8d8"></div>
<div class="t" style="left:1286.0px;top:425.4px;font-size:12.3px;line-height:12.3px;color:#111;font-weight:normal;transform:scaleY(1.05);transform-origin:0 80%">Nachklärung</div>
<div class="t" style="right:94.5px;top:426.3px;font-size:11.2px;line-height:11.2px;color:#111;font-weight:normal;text-align:right;transform:scaleY(1.15);transform-origin:100% 80%">2.577,37</div>
<div class="t" style="right:9.0px;top:426.3px;font-size:11.2px;line-height:11.2px;color:#111;font-weight:normal;text-align:right;transform:scaleY(1.15);transform-origin:100% 80%">0,24</div>
<div class="r" style="left:1286px;top:444px;width:302px;height:26px;background:#f7f7f7"></div>
<div class="r" style="left:1286px;top:469px;width:302px;height:1px;background:#d8d8d8"></div>
<div class="t" style="left:1286.0px;top:451.4px;font-size:12.3px;line-height:12.3px;color:#111;font-weight:normal;transform:scaleY(1.05);transform-origin:0 80%">Fällmitteldosierstation</div>
<div class="t" style="right:94.5px;top:452.3px;font-size:11.2px;line-height:11.2px;color:#111;font-weight:normal;text-align:right;transform:scaleY(1.15);transform-origin:100% 80%">890,17</div>
<div class="t" style="right:9.0px;top:452.3px;font-size:11.2px;line-height:11.2px;color:#111;font-weight:normal;text-align:right;transform:scaleY(1.15);transform-origin:100% 80%">0,08</div>
<div class="r" style="left:1286px;top:470px;width:302px;height:26px;background:#ffffff"></div>
<div class="r" style="left:1286px;top:495px;width:302px;height:1px;background:#d8d8d8"></div>
<div class="t" style="left:1286.0px;top:477.4px;font-size:12.3px;line-height:12.3px;color:#111;font-weight:normal;transform:scaleY(1.05);transform-origin:0 80%">Ablauf</div>
<div class="t" style="right:94.5px;top:478.3px;font-size:11.2px;line-height:11.2px;color:#111;font-weight:normal;text-align:right;transform:scaleY(1.15);transform-origin:100% 80%">103,72</div>
<div class="t" style="right:9.0px;top:478.3px;font-size:11.2px;line-height:11.2px;color:#111;font-weight:normal;text-align:right;transform:scaleY(1.15);transform-origin:100% 80%">0,01</div>
<div class="r" style="left:1286px;top:496px;width:302px;height:26px;background:#f7f7f7"></div>
<div class="r" style="left:1286px;top:521px;width:302px;height:1px;background:#d8d8d8"></div>
<div class="t" style="left:1286.0px;top:503.4px;font-size:12.3px;line-height:12.3px;color:#111;font-weight:normal;transform:scaleY(1.05);transform-origin:0 80%">Brunnen</div>
<div class="t" style="right:94.5px;top:504.3px;font-size:11.2px;line-height:11.2px;color:#111;font-weight:normal;text-align:right;transform:scaleY(1.15);transform-origin:100% 80%">92,55</div>
<div class="t" style="right:9.0px;top:504.3px;font-size:11.2px;line-height:11.2px;color:#111;font-weight:normal;text-align:right;transform:scaleY(1.15);transform-origin:100% 80%">0,01</div>
<div class="r" style="left:1286px;top:522px;width:302px;height:26px;background:#ffffff"></div>
<div class="r" style="left:1286px;top:547px;width:302px;height:1px;background:#d8d8d8"></div>
<div class="t" style="left:1286.0px;top:529.4px;font-size:12.3px;line-height:12.3px;color:#111;font-weight:normal;transform:scaleY(1.05);transform-origin:0 80%">Heizung</div>
<div class="t" style="right:94.5px;top:530.3px;font-size:11.2px;line-height:11.2px;color:#111;font-weight:normal;text-align:right;transform:scaleY(1.15);transform-origin:100% 80%">0,00</div>
<div class="t" style="right:9.0px;top:530.3px;font-size:11.2px;line-height:11.2px;color:#111;font-weight:normal;text-align:right;transform:scaleY(1.15);transform-origin:100% 80%">0,00</div>
<div class="r" style="left:1286px;top:548px;width:302px;height:26px;background:#f7f7f7"></div>
<div class="r" style="left:1286px;top:573px;width:302px;height:1px;background:#d8d8d8"></div>
<div class="t" style="left:1286.0px;top:555.4px;font-size:12.3px;line-height:12.3px;color:#111;font-weight:normal;transform:scaleY(1.05);transform-origin:0 80%">Gasnutzung</div>
<div class="t" style="right:94.5px;top:556.3px;font-size:11.2px;line-height:11.2px;color:#111;font-weight:normal;text-align:right;transform:scaleY(1.15);transform-origin:100% 80%">0,00</div>
<div class="t" style="right:9.0px;top:556.3px;font-size:11.2px;line-height:11.2px;color:#111;font-weight:normal;text-align:right;transform:scaleY(1.15);transform-origin:100% 80%">0,00</div>
<div class="r" style="left:1286px;top:574px;width:302px;height:26px;background:#ffffff"></div>
<div class="r" style="left:1286px;top:599px;width:302px;height:1px;background:#d8d8d8"></div>
<div class="t" style="left:1286.0px;top:581.4px;font-size:12.3px;line-height:12.3px;color:#111;font-weight:normal;transform:scaleY(1.05);transform-origin:0 80%">Bandeindicker</div>
<div class="t" style="right:94.5px;top:582.3px;font-size:11.2px;line-height:11.2px;color:#111;font-weight:normal;text-align:right;transform:scaleY(1.15);transform-origin:100% 80%">20.966,00</div>
<div class="t" style="right:9.0px;top:582.3px;font-size:11.2px;line-height:11.2px;color:#111;font-weight:normal;text-align:right;transform:scaleY(1.15);transform-origin:100% 80%">1,93</div>
<div class="r" style="left:1431px;top:210px;width:1px;height:380px;background:#d8d8d8"></div>
<div class="r" style="left:1502px;top:210px;width:1px;height:380px;background:#d8d8d8"></div>
<div class="r" style="left:1588px;top:210px;width:1px;height:380px;background:#d8d8d8"></div>
<svg class="r" style="left:0;top:0" width="1592" height="978"><path d="M355 773.5 H1250" stroke="#efefef" stroke-width="1"/><path d="M335 773.5 H340.5" stroke="#c8c8c8" stroke-width="1"/><path d="M355 739.0 H1250" stroke="#efefef" stroke-width="1"/><path d="M335 739.0 H340.5" stroke="#c8c8c8" stroke-width="1"/><path d="M355 704.5 H1250" stroke="#efefef" stroke-width="1"/><path d="M335 704.5 H340.5" stroke="#c8c8c8" stroke-width="1"/><path d="M355 670.0 H1250" stroke="#efefef" stroke-width="1"/><path d="M335 670.0 H340.5" stroke="#c8c8c8" stroke-width="1"/><path d="M355 635.5 H1250" stroke="#efefef" stroke-width="1"/><path d="M335 635.5 H340.5" stroke="#c8c8c8" stroke-width="1"/><path d="M355 601.0 H1250" stroke="#efefef" stroke-width="1"/><path d="M335 601.0 H340.5" stroke="#c8c8c8" stroke-width="1"/><path d="M355 566.5 H1250" stroke="#efefef" stroke-width="1"/><path d="M335 566.5 H340.5" stroke="#c8c8c8" stroke-width="1"/><path d="M340.5 566 V774" stroke="#c8c8c8" stroke-width="1"/><path d="M344 573 L347.5 569 L351 573Z" fill="#d0d0d0"/><rect x="344" y="575" width="7.5" height="190" fill="#c2c2c2"/><rect x="345.5" y="577" width="4.5" height="5" fill="#fff" stroke="#c2c2c2" stroke-width="0.5"/><rect x="345.5" y="758" width="4.5" height="5" fill="#fff"/><path d="M344 767 L347.5 771 L351 767Z" fill="#d0d0d0"/><path d="M362 781 L366 777.5 L366 784.5Z" fill="#d0d0d0"/><rect x="366" y="777.5" width="900" height="7.5" fill="#c2c2c2"/><rect x="368" y="779" width="5" height="4.5" fill="#fff"/><path d="M355 788 H1250" stroke="#d0d0d0" stroke-width="1"/><path d="M355.0 788 V793" stroke="#d0d0d0" stroke-width="1"/><path d="M382.1 788 V793" stroke="#d0d0d0" stroke-width="1"/><rect x="386.7" y="772.0" width="18" height="1.5" fill="#c7e29f"/><path d="M409.3 788 V793" stroke="#d0d0d0" stroke-width="1"/><rect x="413.9" y="769.0" width="18" height="4.5" fill="#8dc33f"/><path d="M436.4 788 V793" stroke="#d0d0d0" stroke-width="1"/><rect x="441.0" y="768.3" width="18" height="5.2" fill="#8dc33f"/><path d="M463.6 788 V793" stroke="#d0d0d0" stroke-width="1"/><rect x="468.2" y="749.6" width="18" height="23.9" fill="#8dc33f"/><path d="M490.8 788 V793" stroke="#d0d0d0" stroke-width="1"/><rect x="495.3" y="745.3" width="18" height="28.2" fill="#8dc33f"/><path d="M517.9 788 V793" stroke="#d0d0d0" stroke-width="1"/><rect x="522.5" y="757.1" width="18" height="16.4" fill="#8dc33f"/><path d="M545.0 788 V793" stroke="#d0d0d0" stroke-width="1"/><rect x="549.6" y="625.3" width="18" height="148.2" fill="#8dc33f"/><path d="M572.2 788 V793" stroke="#d0d0d0" stroke-width="1"/><rect x="576.8" y="616.9" width="18" height="156.6" fill="#8dc33f"/><path d="M599.4 788 V793" stroke="#d0d0d0" stroke-width="1"/><path d="M626.5 788 V793" stroke="#d0d0d0" stroke-width="1"/><rect x="631.1" y="601.3" width="18" height="172.2" fill="#8dc33f"/><path d="M653.6 788 V793" stroke="#d0d0d0" stroke-width="1"/><rect x="658.2" y="771.4" width="18" height="2.1" fill="#8dc33f"/><path d="M680.8 788 V793" stroke="#d0d0d0" stroke-width="1"/><path d="M708.0 788 V793" stroke="#d0d0d0" stroke-width="1"/><path d="M735.1 788 V793" stroke="#d0d0d0" stroke-width="1"/><path d="M762.2 788 V793" stroke="#d0d0d0" stroke-width="1"/><path d="M789.4 788 V793" stroke="#d0d0d0" stroke-width="1"/><path d="M816.5 788 V793" stroke="#d0d0d0" stroke-width="1"/><rect x="821.1" y="621.2" width="18" height="152.3" fill="#8dc33f"/><path d="M843.7 788 V793" stroke="#d0d0d0" stroke-width="1"/><rect x="848.3" y="761.7" width="18" height="11.8" fill="#8dc33f"/><path d="M870.9 788 V793" stroke="#d0d0d0" stroke-width="1"/><rect x="875.4" y="772.0" width="18" height="1.5" fill="#c7e29f"/><path d="M898.0 788 V793" stroke="#d0d0d0" stroke-width="1"/><path d="M925.1 788 V793" stroke="#d0d0d0" stroke-width="1"/></svg>
<div class="t" style="right:1260.5px;top:768.9px;font-size:11.3px;line-height:11.3px;color:#1a1a1a;font-weight:normal;text-align:right;">0</div>
<div class="t" style="right:1260.5px;top:734.4px;font-size:11.3px;line-height:11.3px;color:#1a1a1a;font-weight:normal;text-align:right;">10000</div>
<div class="t" style="right:1260.5px;top:699.9px;font-size:11.3px;line-height:11.3px;color:#1a1a1a;font-weight:normal;text-align:right;">20000</div>
<div class="t" style="right:1260.5px;top:665.4px;font-size:11.3px;line-height:11.3px;color:#1a1a1a;font-weight:normal;text-align:right;">30000</div>
<div class="t" style="right:1260.5px;top:630.9px;font-size:11.3px;line-height:11.3px;color:#1a1a1a;font-weight:normal;text-align:right;">40000</div>
<div class="t" style="right:1260.5px;top:596.4px;font-size:11.3px;line-height:11.3px;color:#1a1a1a;font-weight:normal;text-align:right;">50000</div>
<div class="t" style="right:1260.5px;top:561.9px;font-size:11.3px;line-height:11.3px;color:#1a1a1a;font-weight:normal;text-align:right;">60000</div>
<div class="t" style="left:267px;top:662px;width:40px;text-align:center;font-size:11.5px;line-height:14px;color:#1a1a1a;transform:rotate(-90deg)">kWh</div>
<div class="t" style="left:329.6px;width:80px;top:760.4px;font-size:11.3px;line-height:11.3px;color:#1a1a1a;font-weight:normal;text-align:center;transform:scaleY(1.08);transform-origin:50% 80%">0</div>
<div class="t" style="left:356.7px;width:80px;top:759.2px;font-size:11.3px;line-height:11.3px;color:#1a1a1a;font-weight:normal;text-align:center;transform:scaleY(1.08);transform-origin:50% 80%">159</div>
<div class="t" style="left:383.9px;width:80px;top:756.3px;font-size:11.3px;line-height:11.3px;color:#1a1a1a;font-weight:normal;text-align:center;transform:scaleY(1.08);transform-origin:50% 80%">1.303</div>
<div class="t" style="left:411.0px;width:80px;top:741.3px;font-size:11.3px;line-height:11.3px;color:#1a1a1a;font-weight:normal;text-align:center;transform:scaleY(1.08);transform-origin:50% 80%">1.521</div>
<div class="t" style="left:438.2px;width:80px;top:725.9px;font-size:11.3px;line-height:11.3px;color:#1a1a1a;font-weight:normal;text-align:center;transform:scaleY(1.08);transform-origin:50% 80%">6.937</div>
<div class="t" style="left:465.3px;width:80px;top:740.1px;font-size:11.3px;line-height:11.3px;color:#1a1a1a;font-weight:normal;text-align:center;transform:scaleY(1.08);transform-origin:50% 80%">8.172</div>
<div class="t" style="left:492.5px;width:80px;top:754.3px;font-size:11.3px;line-height:11.3px;color:#1a1a1a;font-weight:normal;text-align:center;transform:scaleY(1.08);transform-origin:50% 80%">4.758</div>
<div class="t" style="left:519.6px;width:80px;top:612.5px;font-size:11.3px;line-height:11.3px;color:#1a1a1a;font-weight:normal;text-align:center;transform:scaleY(1.08);transform-origin:50% 80%">42.962</div>
<div class="t" style="left:546.8px;width:80px;top:597.5px;font-size:11.3px;line-height:11.3px;color:#1a1a1a;font-weight:normal;text-align:center;transform:scaleY(1.08);transform-origin:50% 80%">45.392</div>
<div class="t" style="left:573.9px;width:80px;top:760.4px;font-size:11.3px;line-height:11.3px;color:#1a1a1a;font-weight:normal;text-align:center;transform:scaleY(1.08);transform-origin:50% 80%">0</div>
<div class="t" style="left:601.1px;width:80px;top:588.5px;font-size:11.3px;line-height:11.3px;color:#1a1a1a;font-weight:normal;text-align:center;transform:scaleY(1.08);transform-origin:50% 80%">49.903</div>
<div class="t" style="left:628.2px;width:80px;top:758.4px;font-size:11.3px;line-height:11.3px;color:#1a1a1a;font-weight:normal;text-align:center;transform:scaleY(1.08);transform-origin:50% 80%">604</div>
<div class="t" style="left:655.4px;width:80px;top:760.4px;font-size:11.3px;line-height:11.3px;color:#1a1a1a;font-weight:normal;text-align:center;transform:scaleY(1.08);transform-origin:50% 80%">0</div>
<div class="t" style="left:682.5px;width:80px;top:760.4px;font-size:11.3px;line-height:11.3px;color:#1a1a1a;font-weight:normal;text-align:center;transform:scaleY(1.08);transform-origin:50% 80%">0</div>
<div class="t" style="left:709.7px;width:80px;top:760.4px;font-size:11.3px;line-height:11.3px;color:#1a1a1a;font-weight:normal;text-align:center;transform:scaleY(1.08);transform-origin:50% 80%">0</div>
<div class="t" style="left:736.8px;width:80px;top:760.4px;font-size:11.3px;line-height:11.3px;color:#1a1a1a;font-weight:normal;text-align:center;transform:scaleY(1.08);transform-origin:50% 80%">0</div>
<div class="t" style="left:764.0px;width:80px;top:760.4px;font-size:11.3px;line-height:11.3px;color:#1a1a1a;font-weight:normal;text-align:center;transform:scaleY(1.08);transform-origin:50% 80%">0</div>
<div class="t" style="left:791.1px;width:80px;top:608.4px;font-size:11.3px;line-height:11.3px;color:#1a1a1a;font-weight:normal;text-align:center;transform:scaleY(1.08);transform-origin:50% 80%">44.140</div>
<div class="t" style="left:818.3px;width:80px;top:748.2px;font-size:11.3px;line-height:11.3px;color:#1a1a1a;font-weight:normal;text-align:center;transform:scaleY(1.08);transform-origin:50% 80%">3.407</div>
<div class="t" style="left:845.4px;width:80px;top:759.2px;font-size:11.3px;line-height:11.3px;color:#1a1a1a;font-weight:normal;text-align:center;transform:scaleY(1.08);transform-origin:50% 80%">38</div>
<div class="t" style="right:1229.4px;top:793.5px;font-size:11.8px;line-height:12px;color:#1a1a1a;white-space:nowrap;transform-origin:100% 0;transform:rotate(-60deg)">Trübwasserpumpe P4</div>
<div class="t" style="right:1202.3px;top:793.5px;font-size:11.8px;line-height:12px;color:#1a1a1a;white-space:nowrap;transform-origin:100% 0;transform:rotate(-60deg)">Rührwerk</div>
<div class="t" style="right:1175.1px;top:793.5px;font-size:11.8px;line-height:12px;color:#1a1a1a;white-space:nowrap;transform-origin:100% 0;transform:rotate(-60deg)">Mazerator VED</div>
<div class="t" style="right:1148.0px;top:793.5px;font-size:11.8px;line-height:12px;color:#1a1a1a;white-space:nowrap;transform-origin:100% 0;transform:rotate(-60deg)">Schlammpumpe P5</div>
<div class="t" style="right:1120.8px;top:793.5px;font-size:11.8px;line-height:12px;color:#1a1a1a;white-space:nowrap;transform-origin:100% 0;transform:rotate(-60deg)">Beschickungspumpe 13</div>
<div class="t" style="right:1093.7px;top:793.5px;font-size:11.8px;line-height:12px;color:#1a1a1a;white-space:nowrap;transform-origin:100% 0;transform:rotate(-60deg)">Beschickungspumpe 14</div>
<div class="t" style="right:1066.5px;top:793.5px;font-size:11.8px;line-height:12px;color:#1a1a1a;white-space:nowrap;transform-origin:100% 0;transform:rotate(-60deg)">Mazerator Beschickung</div>
<div class="t" style="right:1039.4px;top:793.5px;font-size:11.8px;line-height:12px;color:#1a1a1a;white-space:nowrap;transform-origin:100% 0;transform:rotate(-60deg)">Heizschlammpumpe 17</div>
<div class="t" style="right:1012.2px;top:793.5px;font-size:11.8px;line-height:12px;color:#1a1a1a;white-space:nowrap;transform-origin:100% 0;transform:rotate(-60deg)">Heizschlammpumpe 18</div>
<div class="t" style="right:985.1px;top:793.5px;font-size:11.8px;line-height:12px;color:#1a1a1a;white-space:nowrap;transform-origin:100% 0;transform:rotate(-60deg)">Wärmetauscher Mischer</div>
<div class="t" style="right:957.9px;top:793.5px;font-size:11.8px;line-height:12px;color:#1a1a1a;white-space:nowrap;transform-origin:100% 0;transform:rotate(-60deg)">Faulschlammmischer 1</div>
<div class="t" style="right:930.8px;top:793.5px;font-size:11.8px;line-height:12px;color:#1a1a1a;white-space:nowrap;transform-origin:100% 0;transform:rotate(-60deg)">Fettschmierpumpe 1</div>
<div class="t" style="right:903.6px;top:793.5px;font-size:11.8px;line-height:12px;color:#1a1a1a;white-space:nowrap;transform-origin:100% 0;transform:rotate(-60deg)">Faulschlammmischer 2</div>
<div class="t" style="right:876.5px;top:793.5px;font-size:11.8px;line-height:12px;color:#1a1a1a;white-space:nowrap;transform-origin:100% 0;transform:rotate(-60deg)">Fettschmierpumpe 2</div>
<div class="t" style="right:849.3px;top:793.5px;font-size:11.8px;line-height:12px;color:#1a1a1a;white-space:nowrap;transform-origin:100% 0;transform:rotate(-60deg)">Schaumfalle 1</div>
<div class="t" style="right:822.2px;top:793.5px;font-size:11.8px;line-height:12px;color:#1a1a1a;white-space:nowrap;transform-origin:100% 0;transform:rotate(-60deg)">Schaumfalle 2</div>
<div class="t" style="right:795.0px;top:793.5px;font-size:11.8px;line-height:12px;color:#1a1a1a;white-space:nowrap;transform-origin:100% 0;transform:rotate(-60deg)">Mazerator Z3</div>
<div class="t" style="right:767.9px;top:793.5px;font-size:11.8px;line-height:12px;color:#1a1a1a;white-space:nowrap;transform-origin:100% 0;transform:rotate(-60deg)">Mazerator M01</div>
<div class="t" style="right:740.7px;top:793.5px;font-size:11.8px;line-height:12px;color:#1a1a1a;white-space:nowrap;transform-origin:100% 0;transform:rotate(-60deg)">Pumpe 6</div>
<div class="t" style="right:713.6px;top:793.5px;font-size:11.8px;line-height:12px;color:#1a1a1a;white-space:nowrap;transform-origin:100% 0;transform:rotate(-60deg)">Mazerator NED</div>
<div class="t" style="left:836.5px;top:927px;font-size:11.4px;line-height:12px;color:#1a1a1a;white-space:nowrap;transform-origin:0 100%;transform:rotate(-60deg)">Trübwasservorlagepumpe P3</div>
<div class="t" style="left:865px;top:927px;font-size:11.4px;line-height:12px;color:#1a1a1a;white-space:nowrap;transform-origin:0 100%;transform:rotate(-60deg)">Trübwasserpumpe P2</div>
<div class="t" style="left:665.0px;width:200px;top:960.7px;font-size:11.3px;line-height:11.3px;color:#1a1a1a;font-weight:normal;text-align:center;">01.01.2023 - 31.12.2023</div>
<div class="r" style="left:888px;top:589.5px;width:702px;height:387px;border-radius:8px;box-shadow:-4px 10px 28px 0px rgba(0,0,0,0.24)"></div>
<div class="r" style="left:888px;top:589.5px;width:702px;height:387px;border-radius:8px;background:#f0f0f0;border:1px solid #a0a0a6;box-sizing:border-box;overflow:hidden"><div class="r" style="left:0;top:0;width:702px;height:31px;background:#f2f1f8"></div><div class="r" style="left:5px;top:77px;width:694px;height:310px;background:#fff"></div></div>
<svg class="r" style="left:896px;top:595px" width="18" height="18" viewBox="0 0 18 18"><rect x="1.6" y="1.6" width="15" height="15" fill="#fff" stroke="#14146e" stroke-width="1.3"/><path d="M3.2 3.6 L8.2 6.4 L3.2 9.2Z" fill="#2ec52e"/><path d="M8.6 3.6 H14 V5.3 H10.8 V7.9 H13.6 V9.5 H10.8 V12.4 H14.2 V14 H8.6Z" fill="#14146e"/></svg>
<div class="t" style="left:918.5px;top:599.2px;font-size:11.6px;line-height:11.6px;color:#111;font-weight:normal;transform:scaleY(1.08);transform-origin:0 80%">Maschinen Vergleich Beschickungspumpe 14 (01.01.2023-31.12.2023)</div>
<svg class="r" style="left:1460px;top:592px" width="125" height="26"><path d="M8.5 12.5 H19" stroke="#333" stroke-width="1"/><rect x="53.5" y="7.5" width="10.5" height="10" rx="1" fill="none" stroke="#333" stroke-width="1.1"/><path d="M100 7 L110.5 17.5 M110.5 7 L100 17.5" stroke="#333" stroke-width="1.1"/></svg>
<div class="r" style="left:894px;top:620px;width:694px;height:47px;background:#e6e6e6;border:1.5px solid #50505a;box-sizing:border-box"></div>
<div class="r" style="left:1523px;top:620px;width:1.5px;height:47px;background:#50505a"></div>
<svg class="r" style="left:898px;top:631px" width="28" height="28"><circle cx="13.5" cy="13.5" r="11.3" fill="#fff" stroke="#d4d4d4" stroke-width="1"/><path d="M12 10 L15.5 13.5 L12 17" fill="none" stroke="#555" stroke-width="1.2"/></svg>
<div class="t" style="left:936.2px;top:639.5px;font-size:10.4px;line-height:10.4px;color:#111;font-weight:normal;transform:scaleY(1.1);transform-origin:0 80%">Grafiktyp</div>
<div class="r" style="left:991px;top:631px;width:86px;height:25px;background:#e6e6e6;border:1px solid #a8a8a8;box-sizing:border-box"></div>
<div class="t" style="left:997.5px;top:639.0px;font-size:11.8px;line-height:11.8px;color:#111;font-weight:normal;transform:scaleY(1.1);transform-origin:0 80%">Eine Grafik</div>
<svg class="r" style="left:1062px;top:637px" width="10" height="8"><path d="M2 3 L5 6 L8 3" fill="none" stroke="#444" stroke-width="1"/></svg>
<div class="t" style="left:1102.0px;top:640.3px;font-size:10.0px;line-height:10.0px;color:#111;font-weight:normal;transform:scaleY(1.1);transform-origin:0 80%">Transparenz</div>
<svg class="r" style="left:1178px;top:634px" width="175" height="22"><path d="M9 5.5 L4.5 10 L9 14.5" fill="none" stroke="#444" stroke-width="1.3"/><path d="M19 10 H154" stroke="#a9a9a9" stroke-width="1.6"/><rect x="40.5" y="1" width="9" height="18" rx="4.5" fill="#1591b8"/><path d="M163.5 5.5 L168 10 L163.5 14.5" fill="none" stroke="#444" stroke-width="1.3"/></svg>
<div class="r" style="left:1533px;top:631px;width:45px;height:30px;background:#cccccc"></div>
<svg class="r" style="left:1533px;top:631px" width="45" height="30"><path d="M11.5 13 V25 H25" fill="none" stroke="#222" stroke-width="1.2"/><path d="M11.5 21.5 L15 18 L18.5 20 L24.5 15.5 M11.5 24 L15 20.5 L18.5 22.5 L21.5 20 L25 24.5" fill="none" stroke="#333" stroke-width="0.9"/><path d="M28 18 V6.5" stroke="#000" stroke-width="2.2"/><path d="M23.5 10 L28 5.3 L32.5 10" fill="none" stroke="#000" stroke-width="2.4"/></svg>
<svg class="r" style="left:0;top:0" width="1592" height="978"><path d="M952 880.3 H1578" stroke="#ececec" stroke-width="1"/><path d="M932 880.3 H937.5" stroke="#c8c8c8" stroke-width="1"/><path d="M952 847.7 H1578" stroke="#ececec" stroke-width="1"/><path d="M932 847.7 H937.5" stroke="#c8c8c8" stroke-width="1"/><path d="M952 815.0 H1578" stroke="#ececec" stroke-width="1"/><path d="M932 815.0 H937.5" stroke="#c8c8c8" stroke-width="1"/><path d="M952 782.4 H1578" stroke="#ececec" stroke-width="1"/><path d="M932 782.4 H937.5" stroke="#c8c8c8" stroke-width="1"/><path d="M952 749.8 H1578" stroke="#ececec" stroke-width="1"/><path d="M932 749.8 H937.5" stroke="#c8c8c8" stroke-width="1"/><path d="M952 717.1 H1578" stroke="#ececec" stroke-width="1"/><path d="M932 717.1 H937.5" stroke="#c8c8c8" stroke-width="1"/><path d="M952 684.5 H1578" stroke="#ececec" stroke-width="1"/><path d="M932 684.5 H937.5" stroke="#c8c8c8" stroke-width="1"/><path d="M937.5 684 V881" stroke="#c8c8c8" stroke-width="1"/><path d="M940.5 691 L944.5 687 L948.5 691Z" fill="#d0d0d0"/><rect x="940.5" y="693" width="8.5" height="180" fill="#c2c2c2"/><rect x="942" y="694.5" width="5" height="5" fill="#fff"/><rect x="942" y="866" width="5" height="5" fill="#fff"/><path d="M940.5 875 L944.5 879 L948.5 875Z" fill="#d0d0d0"/><path d="M952 880.3 L952.3 814.1 L953.4 801.7 L955.5 802.9 L957.6 801.7 L958.6 807.9 L961.8 799.0 L963.9 807.1 L966 810.1 L967.73 809.4 L969.47 813.9 L971.2 811.1 L972.97 807.4 L974.73 805.1 L976.5 800.7 L979.6 807.9 L981.48 809.2 L983.36 804.1 L985.24 805.7 L987.12 801.0 L989 798.7 L990.75 802.6 L992.5 803.3 L994.25 801.7 L996.0 799.6 L997.75 805.5 L999.5 803.6 L1001.6 810.8 L1003.7 814.1 L1005.8 801.7 L1007.87 801.4 L1009.93 799.7 L1012 803.6 L1013.95 795.2 L1015.9 787.9 L1018.4 832.0 L1020.5 824.9 L1022.6 816.3 L1025.7 818.3 L1028.5 803.6 L1031 824.8 L1032.6 793.2 L1034.95 795.0 L1037.3 803.6 L1039.4 795.5 L1041.45 798.4 L1043.5 794.8 L1045.6 803.6 L1047.7 799.6 L1049.8 800.7 L1051.9 801.8 L1054.0 802.4 L1056.1 802.2 L1058.2 799.0 L1059.97 798.5 L1061.73 792.9 L1063.5 793.2 L1066.6 800.7 L1069.8 799.4 L1072.3 823.5 L1074.15 811.8 L1076 795.5 L1077.77 798.0 L1079.53 800.8 L1081.3 804.9 L1083.4 803.7 L1085.5 800.7 L1088.6 776.5 L1089.3 880.3 L1090.1 880.3 L1091.2 793.2 L1094.5 780.4 L1097 793.2 L1099.1 786.0 L1101.8 782.7 L1105.2 798.4 L1107.3 794.1 L1109.4 790.6 L1111.17 794.0 L1112.93 794.4 L1114.7 791.5 L1117.8 794.1 L1121 791.5 L1124.1 799.0 L1125.87 798.1 L1127.63 791.7 L1129.4 789.9 L1131 801.7 L1133.3 792.7 L1135.6 782.7 L1137.37 782.1 L1139.13 778.2 L1140.9 776.9 L1143 781.7 L1145.1 776.5 L1147.8 782.7 L1149.6 780.9 L1151.4 778.5 L1153.5 795.5 L1154.9 775.5 L1157 776.5 L1158.7 822.5 L1159.8 763.8 L1162.5 761.8 L1165 775.5 L1168.1 766.1 L1170.2 774.2 L1172.3 769.0 L1175.5 762.8 L1177.6 797.4 L1178.6 735.7 L1180.7 761.2 L1182.8 783.7 L1184.9 736.7 L1188.1 729.2 L1190.2 737.7 L1192.3 739.7 L1194.4 723.0 L1196.5 744.9 L1199.6 734.4 L1201.7 756.6 L1204.8 739.7 L1208 733.4 L1210.1 766.1 L1211.1 730.2 L1213.2 727.6 L1215.3 729.2 L1217.4 720.7 L1220.6 707.3 L1221.6 744.9 L1223.5 719.5 L1225.4 696.9 L1227.9 730.2 L1230.4 704.1 L1231.7 718.8 L1233.2 719.7 L1234.2 815.0 L1236.3 817.3 L1238.4 800.7 L1240.9 794.8 L1242.8 805.3 L1244.7 812.1 L1245.7 757.6 L1248.9 804.9 L1251.4 799.4 L1253.3 802.1 L1255.2 805.9 L1257.7 807.3 L1260.2 809.2 L1262.3 802.7 L1264.4 801.7 L1266.5 801.0 L1268.6 803.6 L1271.8 801.7 L1273.53 805.4 L1275.27 802.6 L1277 808.2 L1280.2 805.9 L1282.3 811.1 L1285.4 805.9 L1288.5 786.0 L1291.7 794.1 L1294.4 809.2 L1295.9 793.2 L1298.0 796.4 L1300.1 794.1 L1302.8 810.1 L1304.3 803.6 L1306.4 807.9 L1307.8 763.8 L1310 809.2 L1313.3 765.1 L1315.8 799.4 L1317.9 801.7 L1321 794.1 L1321.7 822.5 L1323.45 826.2 L1325.2 828.7 L1327.3 824.3 L1329.4 823.5 L1331.5 816.3 L1333.6 821.6 L1335.7 816.3 L1337.8 823.5 L1340.6 818.3 L1342.47 823.0 L1344.33 822.7 L1346.2 824.8 L1349.4 816.0 L1351 825.8 L1352.5 820.9 L1354.6 822.2 L1356.1 838.2 L1358.2 830.0 L1360.6 832.7 L1363 828.7 L1364.5 839.5 L1367.2 838.2 L1368.2 820.9 L1370.3 827.8 L1373.5 813.1 L1375.6 823.5 L1378.7 826.8 L1380.8 821.6 L1384 816.3 L1386 817.3 L1388.2 880.3 L1419.4 880.3 L1420.9 801.7 L1423.6 822.5 L1425.7 819.3 L1428.9 838.2 L1430.5 839.2 L1432 824.5 L1434.1 837.2 L1436.2 839.2 L1436.8 812.1 L1438.6 814.5 L1440.4 819.3 L1443.5 817.3 L1446.7 822.5 L1449.4 828.7 L1451.5 823.5 L1453 834.9 L1453.6 764.8 L1455.35 789.1 L1457.1 817.3 L1459.2 796.4 L1461.3 806.9 L1464.5 833.0 L1466.6 823.5 L1469.7 826.8 L1471.8 822.5 L1472.9 792.2 L1475 822.5 L1477.1 823.5 L1478.7 842.4 L1480.2 809.8 L1482.3 837.2 L1484.03 837.0 L1485.77 835.2 L1487.5 838.2 L1489.2 831.0 L1492.1 849.6 L1493.8 829.7 L1495.57 828.7 L1497.33 823.5 L1499.1 822.5 L1501.2 825.0 L1503.3 828.7 L1505.35 834.5 L1507.4 841.5 L1510.6 826.8 L1512.7 827.4 L1514.8 825.0 L1516.9 827.8 L1519.0 826.2 L1521.1 831.0 L1523.2 828.4 L1525.3 825.5 L1527.35 821.7 L1529.4 820.3 L1532.6 824.5 L1534.7 820.3 L1536.8 828.7 L1539.9 818.3 L1541.67 824.6 L1543.43 823.2 L1545.2 827.8 L1547.3 823.0 L1549.4 820.3 L1552.5 818.3 L1553.5 880.3 L1554.6 812.1 L1557.7 822.5 L1560.9 820.3 L1562.63 824.4 L1564.37 833.4 L1566.1 843.4 L1567.2 816.3 L1568.93 820.6 L1570.67 822.6 L1572.4 824.5 L1574.5 817.9 L1576.6 813.7 L1577.6 827.8 L1577.6 880.3 Z" fill="#d8f3e5"/><path d="M952.3 814.1 L953.4 801.7 L955.5 802.9 L957.6 801.7 L958.6 807.9 L961.8 799.0 L963.9 807.1 L966 810.1 L967.73 809.4 L969.47 813.9 L971.2 811.1 L972.97 807.4 L974.73 805.1 L976.5 800.7 L979.6 807.9 L981.48 809.2 L983.36 804.1 L985.24 805.7 L987.12 801.0 L989 798.7 L990.75 802.6 L992.5 803.3 L994.25 801.7 L996.0 799.6 L997.75 805.5 L999.5 803.6 L1001.6 810.8 L1003.7 814.1 L1005.8 801.7 L1007.87 801.4 L1009.93 799.7 L1012 803.6 L1013.95 795.2 L1015.9 787.9 L1018.4 832.0 L1020.5 824.9 L1022.6 816.3 L1025.7 818.3 L1028.5 803.6 L1031 824.8 L1032.6 793.2 L1034.95 795.0 L1037.3 803.6 L1039.4 795.5 L1041.45 798.4 L1043.5 794.8 L1045.6 803.6 L1047.7 799.6 L1049.8 800.7 L1051.9 801.8 L1054.0 802.4 L1056.1 802.2 L1058.2 799.0 L1059.97 798.5 L1061.73 792.9 L1063.5 793.2 L1066.6 800.7 L1069.8 799.4 L1072.3 823.5 L1074.15 811.8 L1076 795.5 L1077.77 798.0 L1079.53 800.8 L1081.3 804.9 L1083.4 803.7 L1085.5 800.7 L1088.6 776.5 L1089.3 880.3 L1090.1 880.3 L1091.2 793.2 L1094.5 780.4 L1097 793.2 L1099.1 786.0 L1101.8 782.7 L1105.2 798.4 L1107.3 794.1 L1109.4 790.6 L1111.17 794.0 L1112.93 794.4 L1114.7 791.5 L1117.8 794.1 L1121 791.5 L1124.1 799.0 L1125.87 798.1 L1127.63 791.7 L1129.4 789.9 L1131 801.7 L1133.3 792.7 L1135.6 782.7 L1137.37 782.1 L1139.13 778.2 L1140.9 776.9 L1143 781.7 L1145.1 776.5 L1147.8 782.7 L1149.6 780.9 L1151.4 778.5 L1153.5 795.5 L1154.9 775.5 L1157 776.5 L1158.7 822.5 L1159.8 763.8 L1162.5 761.8 L1165 775.5 L1168.1 766.1 L1170.2 774.2 L1172.3 769.0 L1175.5 762.8 L1177.6 797.4 L1178.6 735.7 L1180.7 761.2 L1182.8 783.7 L1184.9 736.7 L1188.1 729.2 L1190.2 737.7 L1192.3 739.7 L1194.4 723.0 L1196.5 744.9 L1199.6 734.4 L1201.7 756.6 L1204.8 739.7 L1208 733.4 L1210.1 766.1 L1211.1 730.2 L1213.2 727.6 L1215.3 729.2 L1217.4 720.7 L1220.6 707.3 L1221.6 744.9 L1223.5 719.5 L1225.4 696.9 L1227.9 730.2 L1230.4 704.1 L1231.7 718.8 L1233.2 719.7 L1234.2 815.0 L1236.3 817.3 L1238.4 800.7 L1240.9 794.8 L1242.8 805.3 L1244.7 812.1 L1245.7 757.6 L1248.9 804.9 L1251.4 799.4 L1253.3 802.1 L1255.2 805.9 L1257.7 807.3 L1260.2 809.2 L1262.3 802.7 L1264.4 801.7 L1266.5 801.0 L1268.6 803.6 L1271.8 801.7 L1273.53 805.4 L1275.27 802.6 L1277 808.2 L1280.2 805.9 L1282.3 811.1 L1285.4 805.9 L1288.5 786.0 L1291.7 794.1 L1294.4 809.2 L1295.9 793.2 L1298.0 796.4 L1300.1 794.1 L1302.8 810.1 L1304.3 803.6 L1306.4 807.9 L1307.8 763.8 L1310 809.2 L1313.3 765.1 L1315.8 799.4 L1317.9 801.7 L1321 794.1 L1321.7 822.5 L1323.45 826.2 L1325.2 828.7 L1327.3 824.3 L1329.4 823.5 L1331.5 816.3 L1333.6 821.6 L1335.7 816.3 L1337.8 823.5 L1340.6 818.3 L1342.47 823.0 L1344.33 822.7 L1346.2 824.8 L1349.4 816.0 L1351 825.8 L1352.5 820.9 L1354.6 822.2 L1356.1 838.2 L1358.2 830.0 L1360.6 832.7 L1363 828.7 L1364.5 839.5 L1367.2 838.2 L1368.2 820.9 L1370.3 827.8 L1373.5 813.1 L1375.6 823.5 L1378.7 826.8 L1380.8 821.6 L1384 816.3 L1386 817.3 L1388.2 880.3 L1419.4 880.3 L1420.9 801.7 L1423.6 822.5 L1425.7 819.3 L1428.9 838.2 L1430.5 839.2 L1432 824.5 L1434.1 837.2 L1436.2 839.2 L1436.8 812.1 L1438.6 814.5 L1440.4 819.3 L1443.5 817.3 L1446.7 822.5 L1449.4 828.7 L1451.5 823.5 L1453 834.9 L1453.6 764.8 L1455.35 789.1 L1457.1 817.3 L1459.2 796.4 L1461.3 806.9 L1464.5 833.0 L1466.6 823.5 L1469.7 826.8 L1471.8 822.5 L1472.9 792.2 L1475 822.5 L1477.1 823.5 L1478.7 842.4 L1480.2 809.8 L1482.3 837.2 L1484.03 837.0 L1485.77 835.2 L1487.5 838.2 L1489.2 831.0 L1492.1 849.6 L1493.8 829.7 L1495.57 828.7 L1497.33 823.5 L1499.1 822.5 L1501.2 825.0 L1503.3 828.7 L1505.35 834.5 L1507.4 841.5 L1510.6 826.8 L1512.7 827.4 L1514.8 825.0 L1516.9 827.8 L1519.0 826.2 L1521.1 831.0 L1523.2 828.4 L1525.3 825.5 L1527.35 821.7 L1529.4 820.3 L1532.6 824.5 L1534.7 820.3 L1536.8 828.7 L1539.9 818.3 L1541.67 824.6 L1543.43 823.2 L1545.2 827.8 L1547.3 823.0 L1549.4 820.3 L1552.5 818.3 L1553.5 880.3 L1554.6 812.1 L1557.7 822.5 L1560.9 820.3 L1562.63 824.4 L1564.37 833.4 L1566.1 843.4 L1567.2 816.3 L1568.93 820.6 L1570.67 822.6 L1572.4 824.5 L1574.5 817.9 L1576.6 813.7 L1577.6 827.8" fill="none" stroke="#22c878" stroke-width="2.7" stroke-linejoin="round"/><path d="M955 887.5 L959 884 L959 891Z" fill="#d0d0d0"/><rect x="962" y="883.5" width="605" height="8.5" fill="#c2c2c2"/><rect x="963.5" y="885" width="5" height="5" fill="#fff"/><rect x="1560" y="885" width="5" height="5" fill="#fff"/><path d="M1570 887.5 L1566 884 L1566 891Z" fill="#d0d0d0"/><path d="M952 894 H1578" stroke="#d8d8d8" stroke-width="1"/><path d="M952.00 894 V900 M953.72 894 V900 M955.43 894 V900 M957.15 894 V900 M958.86 894 V900 M960.58 894 V900 M962.29 894 V900 M964.01 894 V900 M965.72 894 V900 M967.44 894 V900 M969.15 894 V900 M970.87 894 V900 M972.58 894 V900 M974.30 894 V900 M976.01 894 V900 M977.73 894 V900 M979.44 894 V900 M981.16 894 V900 M982.87 894 V900 M984.59 894 V900 M986.30 894 V900 M988.02 894 V900 M989.73 894 V900 M991.45 894 V900 M993.16 894 V900 M994.88 894 V900 M996.59 894 V900 M998.31 894 V900 M1000.02 894 V900 M1001.74 894 V900 M1003.45 894 V900 M1005.17 894 V900 M1006.88 894 V900 M1008.60 894 V900 M1010.31 894 V900 M1012.03 894 V900 M1013.74 894 V900 M1015.46 894 V900 M1017.17 894 V900 M1018.89 894 V900 M1020.60 894 V900 M1022.32 894 V900 M1024.03 894 V900 M1025.75 894 V900 M1027.46 894 V900 M1029.18 894 V900 M1030.89 894 V900 M1032.61 894 V900 M1034.32 894 V900 M1036.04 894 V900 M1037.75 894 V900 M1039.47 894 V900 M1041.18 894 V900 M1042.90 894 V900 M1044.61 894 V900 M1046.33 894 V900 M1048.04 894 V900 M1049.76 894 V900 M1051.47 894 V900 M1053.18 894 V900 M1054.90 894 V900 M1056.61 894 V900 M1058.33 894 V900 M1060.04 894 V900 M1061.76 894 V900 M1063.47 894 V900 M1065.19 894 V900 M1066.90 894 V900 M1068.62 894 V900 M1070.33 894 V900 M1072.05 894 V900 M1073.76 894 V900 M1075.48 894 V900 M1077.19 894 V900 M1078.91 894 V900 M1080.62 894 V900 M1082.34 894 V900 M1084.05 894 V900 M1085.77 894 V900 M1087.48 894 V900 M1089.20 894 V900 M1090.91 894 V900 M1092.63 894 V900 M1094.34 894 V900 M1096.06 894 V900 M1097.77 894 V900 M1099.49 894 V900 M1101.20 894 V900 M1102.92 894 V900 M1104.63 894 V900 M1106.35 894 V900 M1108.06 894 V900 M1109.78 894 V900 M1111.49 894 V900 M1113.21 894 V900 M1114.92 894 V900 M1116.64 894 V900 M1118.35 894 V900 M1120.07 894 V900 M1121.78 894 V900 M1123.50 894 V900 M1125.21 894 V900 M1126.93 894 V900 M1128.64 894 V900 M1130.36 894 V900 M1132.07 894 V900 M1133.79 894 V900 M1135.50 894 V900 M1137.22 894 V900 M1138.93 894 V900 M1140.65 894 V900 M1142.36 894 V900 M1144.08 894 V900 M1145.79 894 V900 M1147.51 894 V900 M1149.22 894 V900 M1150.94 894 V900 M1152.65 894 V900 M1154.37 894 V900 M1156.08 894 V900 M1157.80 894 V900 M1159.51 894 V900 M1161.23 894 V900 M1162.94 894 V900 M1164.66 894 V900 M1166.37 894 V900 M1168.09 894 V900 M1169.80 894 V900 M1171.52 894 V900 M1173.23 894 V900 M1174.95 894 V900 M1176.66 894 V900 M1178.38 894 V900 M1180.09 894 V900 M1181.81 894 V900 M1183.52 894 V900 M1185.24 894 V900 M1186.95 894 V900 M1188.67 894 V900 M1190.38 894 V900 M1192.10 894 V900 M1193.81 894 V900 M1195.53 894 V900 M1197.24 894 V900 M1198.96 894 V900 M1200.67 894 V900 M1202.39 894 V900 M1204.10 894 V900 M1205.82 894 V900 M1207.53 894 V900 M1209.25 894 V900 M1210.96 894 V900 M1212.68 894 V900 M1214.39 894 V900 M1216.11 894 V900 M1217.82 894 V900 M1219.54 894 V900 M1221.25 894 V900 M1222.97 894 V900 M1224.68 894 V900 M1226.40 894 V900 M1228.11 894 V900 M1229.83 894 V900 M1231.54 894 V900 M1233.26 894 V900 M1234.97 894 V900 M1236.69 894 V900 M1238.40 894 V900 M1240.12 894 V900 M1241.83 894 V900 M1243.55 894 V900 M1245.26 894 V900 M1246.98 894 V900 M1248.69 894 V900 M1250.41 894 V900 M1252.12 894 V900 M1253.84 894 V900 M1255.55 894 V900 M1257.27 894 V900 M1258.98 894 V900 M1260.70 894 V900 M1262.41 894 V900 M1264.13 894 V900 M1265.84 894 V900 M1267.56 894 V900 M1269.27 894 V900 M1270.99 894 V900 M1272.70 894 V900 M1274.42 894 V900 M1276.13 894 V900 M1277.85 894 V900 M1279.56 894 V900 M1281.28 894 V900 M1282.99 894 V900 M1284.71 894 V900 M1286.42 894 V900 M1288.14 894 V900 M1289.85 894 V900 M1291.57 894 V900 M1293.28 894 V900 M1295.00 894 V900 M1296.71 894 V900 M1298.43 894 V900 M1300.14 894 V900 M1301.86 894 V900 M1303.57 894 V900 M1305.29 894 V900 M1307.00 894 V900 M1308.72 894 V900 M1310.43 894 V900 M1312.15 894 V900 M1313.86 894 V900 M1315.58 894 V900 M1317.29 894 V900 M1319.01 894 V900 M1320.72 894 V900 M1322.44 894 V900 M1324.15 894 V900 M1325.87 894 V900 M1327.58 894 V900 M1329.30 894 V900 M1331.01 894 V900 M1332.73 894 V900 M1334.44 894 V900 M1336.16 894 V900 M1337.87 894 V900 M1339.59 894 V900 M1341.30 894 V900 M1343.02 894 V900 M1344.73 894 V900 M1346.45 894 V900 M1348.16 894 V900 M1349.88 894 V900 M1351.59 894 V900 M1353.31 894 V900 M1355.02 894 V900 M1356.74 894 V900 M1358.45 894 V900 M1360.17 894 V900 M1361.88 894 V900 M1363.60 894 V900 M1365.31 894 V900 M1367.03 894 V900 M1368.74 894 V900 M1370.46 894 V900 M1372.17 894 V900 M1373.89 894 V900 M1375.60 894 V900 M1377.32 894 V900 M1379.03 894 V900 M1380.75 894 V900 M1382.46 894 V900 M1384.18 894 V900 M1385.89 894 V900 M1387.61 894 V900 M1389.32 894 V900 M1391.04 894 V900 M1392.75 894 V900 M1394.47 894 V900 M1396.18 894 V900 M1397.90 894 V900 M1399.61 894 V900 M1401.33 894 V900 M1403.04 894 V900 M1404.76 894 V900 M1406.47 894 V900 M1408.19 894 V900 M1409.90 894 V900 M1411.62 894 V900 M1413.33 894 V900 M1415.05 894 V900 M1416.76 894 V900 M1418.48 894 V900 M1420.19 894 V900 M1421.91 894 V900 M1423.62 894 V900 M1425.34 894 V900 M1427.05 894 V900 M1428.77 894 V900 M1430.48 894 V900 M1432.20 894 V900 M1433.91 894 V900 M1435.63 894 V900 M1437.34 894 V900 M1439.06 894 V900 M1440.77 894 V900 M1442.49 894 V900 M1444.20 894 V900 M1445.92 894 V900 M1447.63 894 V900 M1449.35 894 V900 M1451.06 894 V900 M1452.78 894 V900 M1454.49 894 V900 M1456.21 894 V900 M1457.92 894 V900 M1459.64 894 V900 M1461.35 894 V900 M1463.07 894 V900 M1464.78 894 V900 M1466.50 894 V900 M1468.21 894 V900 M1469.93 894 V900 M1471.64 894 V900 M1473.36 894 V900 M1475.07 894 V900 M1476.79 894 V900 M1478.50 894 V900 M1480.22 894 V900 M1481.93 894 V900 M1483.65 894 V900 M1485.36 894 V900 M1487.08 894 V900 M1488.79 894 V900 M1490.51 894 V900 M1492.22 894 V900 M1493.94 894 V900 M1495.65 894 V900 M1497.37 894 V900 M1499.08 894 V900 M1500.80 894 V900 M1502.51 894 V900 M1504.23 894 V900 M1505.94 894 V900 M1507.66 894 V900 M1509.37 894 V900 M1511.09 894 V900 M1512.80 894 V900 M1514.52 894 V900 M1516.23 894 V900 M1517.95 894 V900 M1519.66 894 V900 M1521.38 894 V900 M1523.09 894 V900 M1524.81 894 V900 M1526.52 894 V900 M1528.24 894 V900 M1529.95 894 V900 M1531.67 894 V900 M1533.38 894 V900 M1535.10 894 V900 M1536.81 894 V900 M1538.53 894 V900 M1540.24 894 V900 M1541.96 894 V900 M1543.67 894 V900 M1545.39 894 V900 M1547.10 894 V900 M1548.82 894 V900 M1550.53 894 V900 M1552.25 894 V900 M1553.96 894 V900 M1555.68 894 V900 M1557.39 894 V900 M1559.11 894 V900 M1560.82 894 V900 M1562.54 894 V900 M1564.25 894 V900 M1565.97 894 V900 M1567.68 894 V900 M1569.40 894 V900 M1571.11 894 V900 M1572.83 894 V900 M1574.54 894 V900 M1576.26 894 V900 M1577.97 894 V900" stroke="#c4c4c4" stroke-width="0.9"/></svg>
<div class="t" style="right:663.5px;top:875.4px;font-size:11.9px;line-height:11.9px;color:#1a1a1a;font-weight:normal;text-align:right;">0</div>
<div class="t" style="right:663.5px;top:842.8px;font-size:11.9px;line-height:11.9px;color:#1a1a1a;font-weight:normal;text-align:right;">10</div>
<div class="t" style="right:663.5px;top:810.2px;font-size:11.9px;line-height:11.9px;color:#1a1a1a;font-weight:normal;text-align:right;">20</div>
<div class="t" style="right:663.5px;top:777.5px;font-size:11.9px;line-height:11.9px;color:#1a1a1a;font-weight:normal;text-align:right;">30</div>
<div class="t" style="right:663.5px;top:744.9px;font-size:11.9px;line-height:11.9px;color:#1a1a1a;font-weight:normal;text-align:right;">40</div>
<div class="t" style="right:663.5px;top:712.3px;font-size:11.9px;line-height:11.9px;color:#1a1a1a;font-weight:normal;text-align:right;">50</div>
<div class="t" style="right:663.5px;top:679.6px;font-size:11.9px;line-height:11.9px;color:#1a1a1a;font-weight:normal;text-align:right;">60</div>
<div class="t" style="left:878px;top:775px;width:50px;text-align:center;font-size:11.3px;line-height:14px;color:#1a1a1a;transform:rotate(-90deg)">kWh/d</div>
<div class="r" style="left:1455px;top:675px;width:3px;height:14px;background:#22c878"></div>
<div class="t" style="left:1463.7px;top:673.8px;font-size:11.6px;line-height:11.6px;color:#111;font-weight:normal;transform:scaleY(1.05);transform-origin:0 80%">Beschickungspumpe 14</div>
<div class="t" style="right:647.0px;top:906px;font-size:10.3px;line-height:11px;color:#1a1a1a;white-space:nowrap;transform-origin:100% 0;transform:rotate(-60deg)">01.01.2023</div>
<div class="t" style="right:621.3px;top:906px;font-size:10.3px;line-height:11px;color:#1a1a1a;white-space:nowrap;transform-origin:100% 0;transform:rotate(-60deg)">16.01.2023</div>
<div class="t" style="right:595.6px;top:906px;font-size:10.3px;line-height:11px;color:#1a1a1a;white-space:nowrap;transform-origin:100% 0;transform:rotate(-60deg)">31.01.2023</div>
<div class="t" style="right:569.8px;top:906px;font-size:10.3px;line-height:11px;color:#1a1a1a;white-space:nowrap;transform-origin:100% 0;transform:rotate(-60deg)">15.02.2023</div>
<div class="t" style="right:544.1px;top:906px;font-size:10.3px;line-height:11px;color:#1a1a1a;white-space:nowrap;transform-origin:100% 0;transform:rotate(-60deg)">02.03.2023</div>
<div class="t" style="right:518.4px;top:906px;font-size:10.3px;line-height:11px;color:#1a1a1a;white-space:nowrap;transform-origin:100% 0;transform:rotate(-60deg)">17.03.2023</div>
<div class="t" style="right:492.7px;top:906px;font-size:10.3px;line-height:11px;color:#1a1a1a;white-space:nowrap;transform-origin:100% 0;transform:rotate(-60deg)">01.04.2023</div>
<div class="t" style="right:467.0px;top:906px;font-size:10.3px;line-height:11px;color:#1a1a1a;white-space:nowrap;transform-origin:100% 0;transform:rotate(-60deg)">16.04.2023</div>
<div class="t" style="right:441.2px;top:906px;font-size:10.3px;line-height:11px;color:#1a1a1a;white-space:nowrap;transform-origin:100% 0;transform:rotate(-60deg)">01.05.2023</div>
<div class="t" style="right:415.5px;top:906px;font-size:10.3px;line-height:11px;color:#1a1a1a;white-space:nowrap;transform-origin:100% 0;transform:rotate(-60deg)">16.05.2023</div>
<div class="t" style="right:389.8px;top:906px;font-size:10.3px;line-height:11px;color:#1a1a1a;white-space:nowrap;transform-origin:100% 0;transform:rotate(-60deg)">31.05.2023</div>
<div class="t" style="right:364.1px;top:906px;font-size:10.3px;line-height:11px;color:#1a1a1a;white-space:nowrap;transform-origin:100% 0;transform:rotate(-60deg)">15.06.2023</div>
<div class="t" style="right:338.4px;top:906px;font-size:10.3px;line-height:11px;color:#1a1a1a;white-space:nowrap;transform-origin:100% 0;transform:rotate(-60deg)">30.06.2023</div>
<div class="t" style="right:312.6px;top:906px;font-size:10.3px;line-height:11px;color:#1a1a1a;white-space:nowrap;transform-origin:100% 0;transform:rotate(-60deg)">15.07.2023</div>
<div class="t" style="right:286.9px;top:906px;font-size:10.3px;line-height:11px;color:#1a1a1a;white-space:nowrap;transform-origin:100% 0;transform:rotate(-60deg)">30.07.2023</div>
<div class="t" style="right:261.2px;top:906px;font-size:10.3px;line-height:11px;color:#1a1a1a;white-space:nowrap;transform-origin:100% 0;transform:rotate(-60deg)">14.08.2023</div>
<div class="t" style="right:235.5px;top:906px;font-size:10.3px;line-height:11px;color:#1a1a1a;white-space:nowrap;transform-origin:100% 0;transform:rotate(-60deg)">29.08.2023</div>
<div class="t" style="right:209.8px;top:906px;font-size:10.3px;line-height:11px;color:#1a1a1a;white-space:nowrap;transform-origin:100% 0;transform:rotate(-60deg)">13.09.2023</div>
<div class="t" style="right:184.0px;top:906px;font-size:10.3px;line-height:11px;color:#1a1a1a;white-space:nowrap;transform-origin:100% 0;transform:rotate(-60deg)">28.09.2023</div>
<div class="t" style="right:158.3px;top:906px;font-size:10.3px;line-height:11px;color:#1a1a1a;white-space:nowrap;transform-origin:100% 0;transform:rotate(-60deg)">13.10.2023</div>
<div class="t" style="right:132.6px;top:906px;font-size:10.3px;line-height:11px;color:#1a1a1a;white-space:nowrap;transform-origin:100% 0;transform:rotate(-60deg)">28.10.2023</div>
<div class="t" style="right:106.9px;top:906px;font-size:10.3px;line-height:11px;color:#1a1a1a;white-space:nowrap;transform-origin:100% 0;transform:rotate(-60deg)">12.11.2023</div>
<div class="t" style="right:81.2px;top:906px;font-size:10.3px;line-height:11px;color:#1a1a1a;white-space:nowrap;transform-origin:100% 0;transform:rotate(-60deg)">27.11.2023</div>
<div class="t" style="right:55.4px;top:906px;font-size:10.3px;line-height:11px;color:#1a1a1a;white-space:nowrap;transform-origin:100% 0;transform:rotate(-60deg)">12.12.2023</div>
<div class="t" style="right:29.7px;top:906px;font-size:10.3px;line-height:11px;color:#1a1a1a;white-space:nowrap;transform-origin:100% 0;transform:rotate(-60deg)">27.12.2023</div>
<div class="t" style="left:1215.0px;width:100px;top:965.7px;font-size:10.8px;line-height:10.8px;color:#1a1a1a;font-weight:normal;text-align:center;">Datum</div>
</body></html>
